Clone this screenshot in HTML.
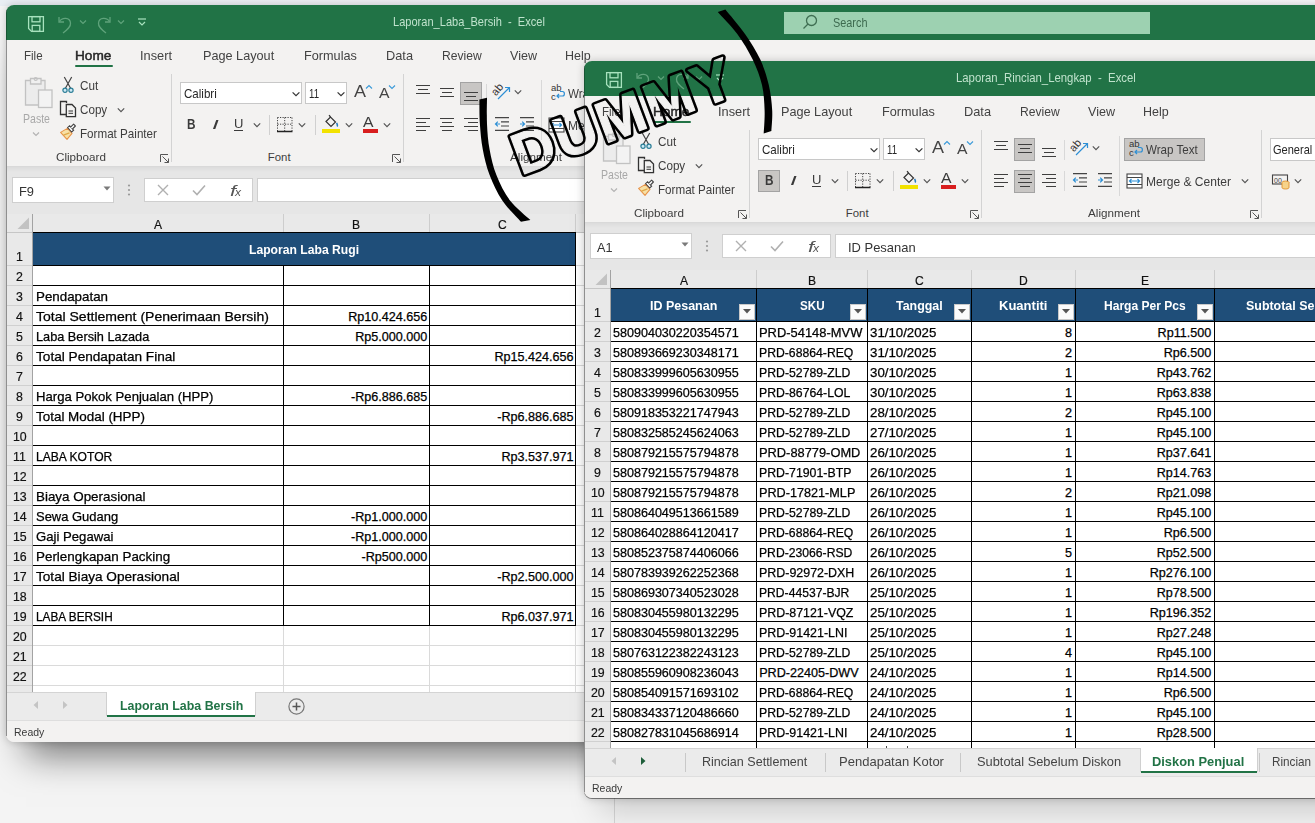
<!DOCTYPE html><html><head><meta charset="utf-8"><style>
html,body{margin:0;padding:0;}
body{width:1315px;height:823px;overflow:hidden;position:relative;background:#f4f4f4;font-family:"Liberation Sans",sans-serif;}
.win{position:absolute;width:1400px;height:823px;}
.t{position:absolute;white-space:pre;}
.c{-webkit-text-stroke:0.25px #000;}
.r{position:absolute;}
.s{position:absolute;overflow:visible;}
</style></head><body>
<div class="r" style="left:0;top:0;width:1315px;height:6px;background:linear-gradient(90deg,#e9eef3,#f1eef4 45%,#f7f5f8)"></div>
<div class="r" style="left:614px;top:790px;width:1px;height:33px;background:#d6d6d6"></div>
<div class="win" style="left:0px;top:0px;"><div class="r" style="left:6px;top:5px;width:1394px;height:737px;background:#f3f2f1;border-radius:8px;box-shadow:0 34px 34px -20px rgba(0,0,0,0.5),0 0 9px rgba(0,0,0,0.2);"></div><div class="r" style="left:6px;top:5px;width:1394px;height:35px;background:#217346;border-radius:8px 8px 0 0;"></div><svg class="s" style="left:26px;top:14px;" width="20" height="20" viewBox="0 0 20 20"><g fill="none" stroke="#a8e2be" stroke-width="1.3"><path d="M2.6 2.6 H17.4 V17.4 H5.5 L2.6 14.5 Z"/><rect x="6" y="2.6" width="8" height="5.2"/><rect x="6.2" y="11.4" width="7.6" height="6"/></g></svg><svg class="s" style="left:56px;top:14px;" width="18" height="20" viewBox="0 0 18 20"><g fill="none" stroke="#5fa37b" stroke-width="1.3"><path d="M3 3 V8 H8"/><path d="M3.5 7.5 C6 3 14 3 14.5 9 C15 13 11 16 7 19"/></g></svg><svg class="s" style="left:77px;top:17px;" width="12" height="10" viewBox="0 0 12 10"><path d="M3 3.5 L6 6.5 L9 3.5" fill="none" stroke="#5fa37b" stroke-width="1.2"/></svg><svg class="s" style="left:95px;top:14px;" width="18" height="20" viewBox="0 0 18 20"><g fill="none" stroke="#5fa37b" stroke-width="1.3"><path d="M15 3 V8 H10"/><path d="M14.5 7.5 C12 3 4 3 3.5 9 C3 13 7 16 11 19"/></g></svg><svg class="s" style="left:114.5px;top:17px;" width="12" height="10" viewBox="0 0 12 10"><path d="M3 3.5 L6 6.5 L9 3.5" fill="none" stroke="#5fa37b" stroke-width="1.2"/></svg><svg class="s" style="left:136px;top:16px;" width="12" height="12" viewBox="0 0 12 12"><g fill="none" stroke="#a8e2be" stroke-width="1.2"><path d="M2 3 H10"/><path d="M3 6 L6 9 L9 6"/></g></svg><div class="t" style="left:392.50px;top:16.47px;font-size:12.2px;line-height:12.2px;color:#bfe2cc;transform:scaleX(0.9074);transform-origin:0 0;">Laporan_Laba_Bersih  -  Excel</div><div class="r" style="left:784px;top:11.5px;width:366px;height:22.200000000000003px;background:#9dd1b1;"></div><svg class="s" style="left:801px;top:13px;" width="18" height="18" viewBox="0 0 18 18"><g fill="none" stroke="#3f6e52" stroke-width="1.3"><circle cx="10.5" cy="7.5" r="5"/><path d="M7 11 L2.5 15.5"/></g></svg><div class="t" style="left:833.00px;top:16.67px;font-size:12.2px;line-height:12.2px;color:#3d6a4f;transform:scaleX(0.8926);transform-origin:0 0;">Search</div><div class="r" style="left:6px;top:40px;width:1394px;height:126px;background:#f3f2f1;"></div><div class="t" style="left:24.10px;top:49.50px;font-size:12.4px;line-height:12.4px;color:#424242;transform:scaleX(0.9310);transform-origin:0 0;">File</div><div class="t" style="left:75.30px;top:49.50px;font-size:12.4px;line-height:12.4px;color:#262626;transform:scaleX(1.1005);transform-origin:0 0;-webkit-text-stroke:0.45px #262626;">Home</div><div class="t" style="left:140.00px;top:49.50px;font-size:12.4px;line-height:12.4px;color:#424242;transform:scaleX(1.0319);transform-origin:0 0;">Insert</div><div class="t" style="left:202.80px;top:49.50px;font-size:12.4px;line-height:12.4px;color:#424242;transform:scaleX(1.0225);transform-origin:0 0;">Page Layout</div><div class="t" style="left:303.80px;top:49.50px;font-size:12.4px;line-height:12.4px;color:#424242;transform:scaleX(1.0237);transform-origin:0 0;">Formulas</div><div class="t" style="left:386.00px;top:49.50px;font-size:12.4px;line-height:12.4px;color:#424242;transform:scaleX(1.0309);transform-origin:0 0;">Data</div><div class="t" style="left:442.30px;top:49.50px;font-size:12.4px;line-height:12.4px;color:#424242;transform:scaleX(0.9765);transform-origin:0 0;">Review</div><div class="t" style="left:510.00px;top:49.50px;font-size:12.4px;line-height:12.4px;color:#424242;transform:scaleX(1.0130);transform-origin:0 0;">View</div><div class="t" style="left:565.30px;top:49.50px;font-size:12.4px;line-height:12.4px;color:#424242;transform:scaleX(1.0078);transform-origin:0 0;">Help</div><div class="r" style="left:74.8px;top:64.6px;width:38.2px;height:2.8000000000000114px;background:#217346;border-radius:1px;"></div><svg class="s" style="left:22px;top:76px;" width="34" height="34" viewBox="0 0 34 34"><g stroke="#c2c2c2" stroke-width="1.3" fill="#ececec"><path d="M3.5 4.5 H23 V29 H3.5 Z"/><path d="M8.5 2.5 H19 V8 H8.5 Z" fill="#f0f0f0"/><rect x="16.5" y="14" width="13.5" height="17.5" fill="#f3f3f3"/></g><circle cx="13.7" cy="3" r="1.5" fill="none" stroke="#c2c2c2" stroke-width="1.2"/></svg><div class="t" style="left:23.00px;top:112.50px;font-size:12.4px;line-height:12.4px;color:#a8a8a8;transform:scaleX(0.8515);transform-origin:0 0;">Paste</div><svg class="s" style="left:29.5px;top:129px;" width="12" height="10" viewBox="0 0 12 10"><path d="M3 3.5 L6 6.5 L9 3.5" fill="none" stroke="#b3b3b3" stroke-width="1.2"/></svg><svg class="s" style="left:61px;top:76px;" width="14" height="18" viewBox="0 0 14 18"><g stroke-width="1.2"><path d="M3.3 1 L9.6 12.2 M10.7 1 L4.4 12.2" stroke="#444" fill="none"/><circle cx="4" cy="14.3" r="2.1" stroke="#2a7d96" fill="#cfeaf5"/><circle cx="10" cy="14.3" r="2.1" stroke="#2a7d96" fill="#cfeaf5"/></g></svg><div class="t" style="left:79.80px;top:79.50px;font-size:12.4px;line-height:12.4px;color:#3d3d3d;transform:scaleX(0.9432);transform-origin:0 0;">Cut</div><svg class="s" style="left:59px;top:100px;" width="18" height="18" viewBox="0 0 18 18"><g fill="none" stroke="#333" stroke-width="1.3"><path d="M7.5 3 V1.5 H1.5 V14.5 H7"/><path d="M7.3 4.5 H13 L16.5 8 V16.6 H7.3 Z"/><path d="M9.5 11 H14 M9.5 13.3 H14" stroke-width="1"/></g></svg><div class="t" style="left:79.80px;top:103.70px;font-size:12.4px;line-height:12.4px;color:#3d3d3d;transform:scaleX(0.9397);transform-origin:0 0;">Copy</div><svg class="s" style="left:114.8px;top:104.5px;" width="12" height="10" viewBox="0 0 12 10"><path d="M2.8 3.4 L6 6.6 L9.2 3.4" fill="none" stroke="#555" stroke-width="1.2"/></svg><svg class="s" style="left:59px;top:123px;" width="18" height="18" viewBox="0 0 18 18"><path d="M1.6 9.4 L8.4 5.4 L13 10.4 L8 16.4 Z" fill="#f7e1a6" stroke="#e8944a" stroke-width="1.1" stroke-linejoin="round"/><path d="M4.5 12.2 L10.5 9.8" stroke="#e0a84a" stroke-width="1.3"/><path d="M8.6 4.6 L10.6 2.8 L14.6 7.2 L12.7 9 Z" fill="#fff" stroke="#444" stroke-width="1.1"/><path d="M11.6 4.2 L14.6 1.2 L16.4 3 L13.4 6" fill="#fff" stroke="#444" stroke-width="1.1" stroke-linejoin="round"/></svg><div class="t" style="left:79.80px;top:128.30px;font-size:12.4px;line-height:12.4px;color:#3d3d3d;transform:scaleX(0.9390);transform-origin:0 0;">Format Painter</div><div class="t" style="left:55.60px;top:152.35px;font-size:11.4px;line-height:11.4px;color:#3d3d3d;transform:scaleX(1.0248);transform-origin:0 0;">Clipboard</div><svg class="s" style="left:159.5px;top:153.5px;" width="10" height="10" viewBox="0 0 10 10"><g fill="none" stroke="#555" stroke-width="1"><path d="M0.5 8 V0.5 H8"/><path d="M2.5 2.5 L8.5 8.5 M4.5 8.5 H8.5 V4.5"/></g></svg><div class="r" style="left:171px;top:74px;width:1.1999999999999886px;height:88px;background:#d3d3d3;"></div><div class="r" style="left:180.4px;top:82.4px;width:121.9px;height:21.89999999999999px;background:#fff;box-sizing:border-box;border:1px solid #c8c8c8;"></div><div class="t" style="left:183.70px;top:88.27px;font-size:12.2px;line-height:12.2px;color:#262626;transform:scaleX(0.9487);transform-origin:0 0;">Calibri</div><svg class="s" style="left:290px;top:88.6px;" width="12" height="10" viewBox="0 0 12 10"><path d="M2.6 3.3 L6 6.7 L9.4 3.3" fill="none" stroke="#333" stroke-width="1.2"/></svg><div class="r" style="left:305.4px;top:82.4px;width:42.0px;height:21.89999999999999px;background:#fff;box-sizing:border-box;border:1px solid #c8c8c8;"></div><div class="t" style="left:308.80px;top:88.27px;font-size:12.2px;line-height:12.2px;color:#262626;transform:scaleX(0.7897);transform-origin:0 0;">11</div><svg class="s" style="left:335px;top:88.6px;" width="12" height="10" viewBox="0 0 12 10"><path d="M2.6 3.3 L6 6.7 L9.4 3.3" fill="none" stroke="#333" stroke-width="1.2"/></svg><div class="t" style="left:354.00px;top:83.41px;font-size:17px;line-height:17px;color:#444;transform:scaleX(1.0582);transform-origin:0 0;">A</div><svg class="s" style="left:365px;top:84px;" width="8" height="6" viewBox="0 0 8 6"><path d="M1 4.5 L4 1.5 L7 4.5" fill="none" stroke="#3a9ad9" stroke-width="1.1"/></svg><div class="t" style="left:379.00px;top:85.53px;font-size:14.5px;line-height:14.5px;color:#444;transform:scaleX(1.0856);transform-origin:0 0;">A</div><svg class="s" style="left:388px;top:84px;" width="8" height="6" viewBox="0 0 8 6"><path d="M1 1.5 L4 4.5 L7 1.5" fill="none" stroke="#3a9ad9" stroke-width="1.1"/></svg><div class="t" style="left:187.30px;top:116.95px;font-size:14px;line-height:14px;color:#3a3a3a;font-weight:bold;transform:scaleX(0.8407);transform-origin:0 0;">B</div><div class="t" style="left:211.50px;top:117.57px;font-size:13.5px;line-height:13.5px;color:#3a3a3a;transform:scaleX(1.8131);transform-origin:0 0;font-style:italic;font-family:"Liberation Serif",serif;">I</div><div class="t" style="left:234.00px;top:117.29px;font-size:13.6px;line-height:13.6px;color:#3a3a3a;transform:scaleX(0.9571);transform-origin:0 0;">U</div><div class="r" style="left:234.2px;top:130.2px;width:8.800000000000011px;height:1.0px;background:#3a3a3a;"></div><svg class="s" style="left:250.8px;top:120px;" width="12" height="10" viewBox="0 0 12 10"><path d="M2.8 3.4 L6 6.6 L9.2 3.4" fill="none" stroke="#555" stroke-width="1.2"/></svg><div class="r" style="left:269.2px;top:114.7px;width:1.0px;height:20.10000000000001px;background:#d0d0d0;"></div><svg class="s" style="left:276px;top:116px;" width="18" height="17" viewBox="0 0 18 17"><g stroke="#444" stroke-width="1" stroke-dasharray="1.2 1.3" fill="none"><path d="M1.5 1.5 H16 M1.5 1.5 V15 M16 1.5 V15 M8.7 1.5 V15 M1.5 8.2 H16"/></g><path d="M1 15.5 H16.5" stroke="#222" stroke-width="1.5"/></svg><svg class="s" style="left:296.3px;top:120px;" width="12" height="10" viewBox="0 0 12 10"><path d="M2.8 3.4 L6 6.6 L9.2 3.4" fill="none" stroke="#555" stroke-width="1.2"/></svg><div class="r" style="left:315.2px;top:114.7px;width:1.0px;height:20.10000000000001px;background:#d0d0d0;"></div><svg class="s" style="left:321px;top:114px;" width="20" height="20" viewBox="0 0 20 20"><path d="M5 7.5 L9.5 3 L14.5 8 L10 12.5 Z" fill="none" stroke="#333" stroke-width="1.2"/><path d="M9.5 3 L8 1.2" stroke="#333" stroke-width="1.2"/><path d="M15.5 9 C16.5 10.5 17 11.5 16 12.5" fill="none" stroke="#2a7fc0" stroke-width="1.5"/></svg><div class="r" style="left:322.4px;top:129.3px;width:17.30000000000001px;height:3.8999999999999773px;background:#f2e200;"></div><svg class="s" style="left:342.5px;top:120px;" width="12" height="10" viewBox="0 0 12 10"><path d="M2.8 3.4 L6 6.6 L9.2 3.4" fill="none" stroke="#555" stroke-width="1.2"/></svg><div class="t" style="left:362.60px;top:115.14px;font-size:14.6px;line-height:14.6px;color:#3a3a3a;transform:scaleX(1.0782);transform-origin:0 0;">A</div><div class="r" style="left:362.6px;top:128.8px;width:15.399999999999977px;height:4.399999999999977px;background:#d81e1e;"></div><svg class="s" style="left:381.2px;top:120px;" width="12" height="10" viewBox="0 0 12 10"><path d="M2.8 3.4 L6 6.6 L9.2 3.4" fill="none" stroke="#555" stroke-width="1.2"/></svg><div class="t" style="left:267.80px;top:152.35px;font-size:11.4px;line-height:11.4px;color:#3d3d3d;">Font</div><svg class="s" style="left:391.5px;top:153.5px;" width="10" height="10" viewBox="0 0 10 10"><g fill="none" stroke="#555" stroke-width="1"><path d="M0.5 8 V0.5 H8"/><path d="M2.5 2.5 L8.5 8.5 M4.5 8.5 H8.5 V4.5"/></g></svg><div class="r" style="left:403.2px;top:74px;width:1.1999999999999886px;height:88px;background:#d3d3d3;"></div><div class="r" style="left:460px;top:82.2px;width:21.80000000000001px;height:22.5px;background:#c8c6c4;box-sizing:border-box;border:1px solid #a3a3a3;"></div><div class="r" style="left:416px;top:84.8px;width:13.600000000000023px;height:1.1500000000000057px;background:#3f3f3f;"></div><div class="r" style="left:417.8px;top:88.9px;width:10.0px;height:1.1500000000000057px;background:#3f3f3f;"></div><div class="r" style="left:416px;top:92.9px;width:13.600000000000023px;height:1.1500000000000057px;background:#3f3f3f;"></div><div class="r" style="left:440px;top:87.9px;width:14px;height:1.1500000000000057px;background:#3f3f3f;"></div><div class="r" style="left:442px;top:91.9px;width:10px;height:1.1500000000000057px;background:#3f3f3f;"></div><div class="r" style="left:440px;top:95.9px;width:14px;height:1.1500000000000057px;background:#3f3f3f;"></div><div class="r" style="left:464px;top:91.9px;width:13.800000000000011px;height:1.1500000000000057px;background:#3f3f3f;"></div><div class="r" style="left:466.2px;top:95.9px;width:9.699999999999989px;height:1.1500000000000057px;background:#3f3f3f;"></div><div class="r" style="left:464px;top:99.9px;width:13.800000000000011px;height:1.1500000000000057px;background:#3f3f3f;"></div><div class="r" style="left:486.3px;top:84px;width:1.0px;height:20px;background:#d8d8d8;"></div><svg class="s" style="left:491px;top:82px;" width="22" height="20" viewBox="0 0 22 20"><text x="0" y="0" font-size="11" fill="#333" transform="translate(5 14.5) rotate(-50)" font-family="Liberation Sans">ab</text><path d="M7 17 L18.5 5.5 M14 5.5 H18.5 V10" fill="none" stroke="#2d8fd5" stroke-width="1.2"/></svg><svg class="s" style="left:512px;top:87px;" width="12" height="10" viewBox="0 0 12 10"><path d="M2.8 3.4 L6 6.6 L9.2 3.4" fill="none" stroke="#555" stroke-width="1.2"/></svg><div class="r" style="left:416px;top:117.8px;width:13.600000000000023px;height:1.1500000000000057px;background:#3f3f3f;"></div><div class="r" style="left:416px;top:121.8px;width:9.699999999999989px;height:1.1500000000000057px;background:#3f3f3f;"></div><div class="r" style="left:416px;top:125.9px;width:13.600000000000023px;height:1.1500000000000057px;background:#3f3f3f;"></div><div class="r" style="left:416px;top:129.9px;width:9.699999999999989px;height:1.1500000000000057px;background:#3f3f3f;"></div><div class="r" style="left:440px;top:117.8px;width:14px;height:1.1500000000000057px;background:#3f3f3f;"></div><div class="r" style="left:442px;top:121.8px;width:10px;height:1.1500000000000057px;background:#3f3f3f;"></div><div class="r" style="left:440px;top:125.9px;width:14px;height:1.1500000000000057px;background:#3f3f3f;"></div><div class="r" style="left:442px;top:129.9px;width:10px;height:1.1500000000000057px;background:#3f3f3f;"></div><div class="r" style="left:464px;top:117.8px;width:13.800000000000011px;height:1.1500000000000057px;background:#3f3f3f;"></div><div class="r" style="left:468.1px;top:121.8px;width:9.699999999999989px;height:1.1500000000000057px;background:#3f3f3f;"></div><div class="r" style="left:464px;top:125.9px;width:13.800000000000011px;height:1.1500000000000057px;background:#3f3f3f;"></div><div class="r" style="left:468.1px;top:129.9px;width:9.699999999999989px;height:1.1500000000000057px;background:#3f3f3f;"></div><div class="r" style="left:486.3px;top:115px;width:1.0px;height:20px;background:#d8d8d8;"></div><svg class="s" style="left:494px;top:116px;" width="16" height="17" viewBox="0 0 16 17"><g stroke="#444" stroke-width="1.2"><path d="M1 1.6 H15 M7 5.8 H15 M7 10 H15 M1 14.4 H15"/></g><path d="M6 8 H1.5 M3.8 5.7 L1.5 8 L3.8 10.3" fill="none" stroke="#2d8fd5" stroke-width="1.2"/></svg><svg class="s" style="left:518.5px;top:116px;" width="16" height="17" viewBox="0 0 16 17"><g stroke="#444" stroke-width="1.2"><path d="M1 1.6 H15 M7 5.8 H15 M7 10 H15 M1 14.4 H15"/></g><path d="M1 8 H5.5 M3.2 5.7 L5.5 8 L3.2 10.3" fill="none" stroke="#2d8fd5" stroke-width="1.2"/></svg><div class="r" style="left:541px;top:80px;width:1px;height:60px;background:#d8d8d8;"></div><svg class="s" style="left:549px;top:83px;" width="18" height="18" viewBox="0 0 18 18"><text x="2" y="8" font-size="9.5" fill="#333" font-family="Liberation Sans">ab</text><text x="2" y="16.5" font-size="9.5" fill="#333" font-family="Liberation Sans">c</text><path d="M8 13 H13.5 C16 13 16 8.5 13.5 8.5 H11 M10 11 L8 13 L10 15" fill="none" stroke="#2d8fd5" stroke-width="1.2"/></svg><div class="t" style="left:568.00px;top:88.30px;font-size:12.4px;line-height:12.4px;color:#3d3d3d;transform:scaleX(0.9357);transform-origin:0 0;">Wrap Text</div><svg class="s" style="left:548px;top:117px;" width="17" height="16" viewBox="0 0 17 16"><rect x="1" y="1" width="15" height="14" fill="#fff" stroke="#444" stroke-width="1.1"/><path d="M1 4.5 H16 M1 11.5 H16" stroke="#444" stroke-width="1"/><path d="M3.5 8 H13.5 M5.5 6 L3.5 8 L5.5 10 M11.5 6 L13.5 8 L11.5 10" fill="none" stroke="#2d8fd5" stroke-width="1.2"/></svg><div class="t" style="left:568.00px;top:119.80px;font-size:12.4px;line-height:12.4px;color:#3d3d3d;transform:scaleX(0.9712);transform-origin:0 0;">Merge &amp; Center</div><svg class="s" style="left:661px;top:120px;" width="12" height="10" viewBox="0 0 12 10"><path d="M2.8 3.4 L6 6.6 L9.2 3.4" fill="none" stroke="#555" stroke-width="1.2"/></svg><div class="t" style="left:509.50px;top:152.35px;font-size:11.4px;line-height:11.4px;color:#3d3d3d;transform:scaleX(1.0258);transform-origin:0 0;">Alignment</div><svg class="s" style="left:671.5px;top:153.5px;" width="10" height="10" viewBox="0 0 10 10"><g fill="none" stroke="#555" stroke-width="1"><path d="M0.5 8 V0.5 H8"/><path d="M2.5 2.5 L8.5 8.5 M4.5 8.5 H8.5 V4.5"/></g></svg><div class="r" style="left:683px;top:74px;width:1.2000000000000455px;height:88px;background:#d3d3d3;"></div><div class="r" style="left:692px;top:82.2px;width:108px;height:22.5px;background:#fff;box-sizing:border-box;border:1px solid #c8c8c8;"></div><div class="t" style="left:695.30px;top:87.80px;font-size:12.4px;line-height:12.4px;color:#262626;transform:scaleX(0.8909);transform-origin:0 0;">General</div><svg class="s" style="left:693px;top:116px;" width="20" height="18" viewBox="0 0 20 18"><rect x="1.5" y="3" width="15" height="9" fill="none" stroke="#444" stroke-width="1.1"/><text x="3" y="10.5" font-size="7" fill="#444" font-family="Liberation Sans">00</text><ellipse cx="14.5" cy="10.5" rx="3.5" ry="1.5" fill="#f6d38a" stroke="#e0902a" stroke-width="0.9"/><path d="M11 10.5 V15.5 C11 17.5 18 17.5 18 15.5 V10.5" fill="#f6d38a" stroke="#e0902a" stroke-width="0.9"/></svg><svg class="s" style="left:714px;top:120px;" width="12" height="10" viewBox="0 0 12 10"><path d="M2.8 3.4 L6 6.6 L9.2 3.4" fill="none" stroke="#555" stroke-width="1.2"/></svg><div class="r" style="left:6px;top:166px;width:1394px;height:48px;background:#e6e6e6;"></div><div class="r" style="left:6px;top:166px;width:1394px;height:1px;background:#d9d9d9;"></div><div class="r" style="left:6px;top:167px;width:1394px;height:5px;background:linear-gradient(#dcdcdc,#e6e6e6);"></div><div class="r" style="left:12.3px;top:177.4px;width:101.3px;height:25.19999999999999px;background:#fff;box-sizing:border-box;border:1px solid #cfcfcf;"></div><div class="t" style="left:18.80px;top:184.50px;font-size:13px;line-height:13px;color:#333;transform:scaleX(0.9888);transform-origin:0 0;">F9</div><svg class="s" style="left:103px;top:186px;" width="8" height="5" viewBox="0 0 8 5"><path d="M0.5 0.5 H7.5 L4 4.5 Z" fill="#7a7a7a"/></svg><svg class="s" style="left:127px;top:183px;" width="4" height="14" viewBox="0 0 4 14"><g fill="#9a9a9a"><circle cx="2" cy="2.5" r="1.1"/><circle cx="2" cy="7" r="1.1"/><circle cx="2" cy="11.5" r="1.1"/></g></svg><div class="r" style="left:144.4px;top:177.5px;width:108.9px;height:24.80000000000001px;background:#fff;box-sizing:border-box;border:1px solid #cfcfcf;"></div><svg class="s" style="left:156px;top:183px;" width="14" height="14" viewBox="0 0 14 14"><path d="M2 2 L12 12 M12 2 L2 12" stroke="#b0b0b0" stroke-width="1.4"/></svg><svg class="s" style="left:191px;top:183px;" width="16" height="14" viewBox="0 0 16 14"><path d="M2 7.5 L6 11.5 L14 2.5" fill="none" stroke="#b0b0b0" stroke-width="1.6"/></svg><div class="t" style="left:229.50px;top:183.65px;font-size:14px;line-height:14px;color:#555;transform:scaleX(1.5427);transform-origin:0 0;font-style:italic;font-family:"Liberation Serif",serif;">f</div><div class="t" style="left:234.80px;top:187.53px;font-size:10px;line-height:10px;color:#555;transform:scaleX(1.2000);transform-origin:0 0;font-style:italic;font-family:"Liberation Serif",serif;">x</div><div class="r" style="left:257.4px;top:177.5px;width:1142.6px;height:24.80000000000001px;background:#fff;box-sizing:border-box;border:1px solid #cfcfcf;"></div><div class="r" style="left:7px;top:214px;width:1393px;height:478px;background:#fff;"></div><div class="r" style="left:7px;top:214px;width:1393px;height:18.5px;background:#e9e9e9;"></div><div class="r" style="left:7px;top:231.5px;width:1393px;height:1.0px;background:#c6c6c6;"></div><svg class="s" style="left:17px;top:217px;" width="13" height="13" viewBox="0 0 13 13"><path d="M12 0.5 V12 H0.5 Z" fill="#c2c2c2"/></svg><div class="r" style="left:283.1px;top:214px;width:1.0px;height:18.5px;background:#cdcdcd;"></div><div class="t" style="left:154.02px;top:217.50px;font-size:13px;line-height:13px;color:#111;transform:scaleX(0.9300);transform-origin:0 0;-webkit-text-stroke:0.2px #111;">A</div><div class="r" style="left:428.9px;top:214px;width:1.0px;height:18.5px;background:#cdcdcd;"></div><div class="t" style="left:352.47px;top:217.50px;font-size:13px;line-height:13px;color:#111;transform:scaleX(0.9300);transform-origin:0 0;-webkit-text-stroke:0.2px #111;">B</div><div class="r" style="left:575.1px;top:214px;width:1.0px;height:18.5px;background:#cdcdcd;"></div><div class="t" style="left:498.13px;top:217.50px;font-size:13px;line-height:13px;color:#111;transform:scaleX(0.9300);transform-origin:0 0;-webkit-text-stroke:0.2px #111;">C</div><div class="r" style="left:759.5px;top:214px;width:1.0px;height:18.5px;background:#cdcdcd;"></div><div class="t" style="left:663.43px;top:217.50px;font-size:13px;line-height:13px;color:#111;transform:scaleX(0.9300);transform-origin:0 0;-webkit-text-stroke:0.2px #111;">D</div><div class="r" style="left:7px;top:232.5px;width:25.5px;height:459.5px;background:#e9e9e9;"></div><div class="r" style="left:32px;top:214px;width:1px;height:478px;background:#a3a3a3;"></div><div class="r" style="left:7px;top:265.0px;width:25px;height:1.0px;background:#d0d0d0;"></div><div class="t" style="left:16.37px;top:250.30px;font-size:13px;line-height:13px;color:#111;transform:scaleX(0.9500);transform-origin:0 0;-webkit-text-stroke:0.2px #111;">1</div><div class="r" style="left:7px;top:285.0px;width:25px;height:1.0px;background:#d0d0d0;"></div><div class="t" style="left:16.37px;top:270.30px;font-size:13px;line-height:13px;color:#111;transform:scaleX(0.9500);transform-origin:0 0;-webkit-text-stroke:0.2px #111;">2</div><div class="r" style="left:7px;top:305.0px;width:25px;height:1.0px;background:#d0d0d0;"></div><div class="t" style="left:16.37px;top:290.30px;font-size:13px;line-height:13px;color:#111;transform:scaleX(0.9500);transform-origin:0 0;-webkit-text-stroke:0.2px #111;">3</div><div class="r" style="left:7px;top:325.0px;width:25px;height:1.0px;background:#d0d0d0;"></div><div class="t" style="left:16.37px;top:310.30px;font-size:13px;line-height:13px;color:#111;transform:scaleX(0.9500);transform-origin:0 0;-webkit-text-stroke:0.2px #111;">4</div><div class="r" style="left:7px;top:345.0px;width:25px;height:1.0px;background:#d0d0d0;"></div><div class="t" style="left:16.37px;top:330.30px;font-size:13px;line-height:13px;color:#111;transform:scaleX(0.9500);transform-origin:0 0;-webkit-text-stroke:0.2px #111;">5</div><div class="r" style="left:7px;top:365.0px;width:25px;height:1.0px;background:#d0d0d0;"></div><div class="t" style="left:16.37px;top:350.30px;font-size:13px;line-height:13px;color:#111;transform:scaleX(0.9500);transform-origin:0 0;-webkit-text-stroke:0.2px #111;">6</div><div class="r" style="left:7px;top:385.0px;width:25px;height:1.0px;background:#d0d0d0;"></div><div class="t" style="left:16.37px;top:370.30px;font-size:13px;line-height:13px;color:#111;transform:scaleX(0.9500);transform-origin:0 0;-webkit-text-stroke:0.2px #111;">7</div><div class="r" style="left:7px;top:405.0px;width:25px;height:1.0px;background:#d0d0d0;"></div><div class="t" style="left:16.37px;top:390.30px;font-size:13px;line-height:13px;color:#111;transform:scaleX(0.9500);transform-origin:0 0;-webkit-text-stroke:0.2px #111;">8</div><div class="r" style="left:7px;top:425.0px;width:25px;height:1.0px;background:#d0d0d0;"></div><div class="t" style="left:16.37px;top:410.30px;font-size:13px;line-height:13px;color:#111;transform:scaleX(0.9500);transform-origin:0 0;-webkit-text-stroke:0.2px #111;">9</div><div class="r" style="left:7px;top:445.0px;width:25px;height:1.0px;background:#d0d0d0;"></div><div class="t" style="left:12.93px;top:430.30px;font-size:13px;line-height:13px;color:#111;transform:scaleX(0.9500);transform-origin:0 0;-webkit-text-stroke:0.2px #111;">10</div><div class="r" style="left:7px;top:465.0px;width:25px;height:1.0px;background:#d0d0d0;"></div><div class="t" style="left:13.39px;top:450.30px;font-size:13px;line-height:13px;color:#111;transform:scaleX(0.9500);transform-origin:0 0;-webkit-text-stroke:0.2px #111;">11</div><div class="r" style="left:7px;top:485.0px;width:25px;height:1.0px;background:#d0d0d0;"></div><div class="t" style="left:12.93px;top:470.30px;font-size:13px;line-height:13px;color:#111;transform:scaleX(0.9500);transform-origin:0 0;-webkit-text-stroke:0.2px #111;">12</div><div class="r" style="left:7px;top:505.0px;width:25px;height:1.0px;background:#d0d0d0;"></div><div class="t" style="left:12.93px;top:490.30px;font-size:13px;line-height:13px;color:#111;transform:scaleX(0.9500);transform-origin:0 0;-webkit-text-stroke:0.2px #111;">13</div><div class="r" style="left:7px;top:525.0px;width:25px;height:1.0px;background:#d0d0d0;"></div><div class="t" style="left:12.93px;top:510.30px;font-size:13px;line-height:13px;color:#111;transform:scaleX(0.9500);transform-origin:0 0;-webkit-text-stroke:0.2px #111;">14</div><div class="r" style="left:7px;top:545.0px;width:25px;height:1.0px;background:#d0d0d0;"></div><div class="t" style="left:12.93px;top:530.30px;font-size:13px;line-height:13px;color:#111;transform:scaleX(0.9500);transform-origin:0 0;-webkit-text-stroke:0.2px #111;">15</div><div class="r" style="left:7px;top:565.0px;width:25px;height:1.0px;background:#d0d0d0;"></div><div class="t" style="left:12.93px;top:550.30px;font-size:13px;line-height:13px;color:#111;transform:scaleX(0.9500);transform-origin:0 0;-webkit-text-stroke:0.2px #111;">16</div><div class="r" style="left:7px;top:585.0px;width:25px;height:1.0px;background:#d0d0d0;"></div><div class="t" style="left:12.93px;top:570.30px;font-size:13px;line-height:13px;color:#111;transform:scaleX(0.9500);transform-origin:0 0;-webkit-text-stroke:0.2px #111;">17</div><div class="r" style="left:7px;top:605.0px;width:25px;height:1.0px;background:#d0d0d0;"></div><div class="t" style="left:12.93px;top:590.30px;font-size:13px;line-height:13px;color:#111;transform:scaleX(0.9500);transform-origin:0 0;-webkit-text-stroke:0.2px #111;">18</div><div class="r" style="left:7px;top:625.0px;width:25px;height:1.0px;background:#d0d0d0;"></div><div class="t" style="left:12.93px;top:610.30px;font-size:13px;line-height:13px;color:#111;transform:scaleX(0.9500);transform-origin:0 0;-webkit-text-stroke:0.2px #111;">19</div><div class="r" style="left:7px;top:645.0px;width:25px;height:1.0px;background:#d0d0d0;"></div><div class="t" style="left:12.93px;top:630.30px;font-size:13px;line-height:13px;color:#111;transform:scaleX(0.9500);transform-origin:0 0;-webkit-text-stroke:0.2px #111;">20</div><div class="r" style="left:7px;top:665.0px;width:25px;height:1.0px;background:#d0d0d0;"></div><div class="t" style="left:12.93px;top:650.30px;font-size:13px;line-height:13px;color:#111;transform:scaleX(0.9500);transform-origin:0 0;-webkit-text-stroke:0.2px #111;">21</div><div class="r" style="left:7px;top:685.0px;width:25px;height:1.0px;background:#d0d0d0;"></div><div class="t" style="left:12.93px;top:670.30px;font-size:13px;line-height:13px;color:#111;transform:scaleX(0.9500);transform-origin:0 0;-webkit-text-stroke:0.2px #111;">22</div><div class="r" style="left:32.5px;top:232.5px;width:543.1px;height:33.0px;background:#1f4e79;"></div><div class="t" style="left:249.05px;top:242.70px;font-size:13px;line-height:13px;color:#fff;font-weight:bold;transform:scaleX(0.9344);transform-origin:0 0;">Laporan Laba Rugi</div><div class="t" style="left:35.80px;top:291.03px;font-size:12.6px;line-height:12.6px;color:#000;transform:scaleX(1.0595);transform-origin:0 0;-webkit-text-stroke:0.25px #000;">Pendapatan</div><div class="t" style="left:35.80px;top:311.03px;font-size:12.6px;line-height:12.6px;color:#000;transform:scaleX(1.1128);transform-origin:0 0;-webkit-text-stroke:0.25px #000;">Total Settlement (Penerimaan Bersih)</div><div class="t" style="left:348.24px;top:311.03px;font-size:12.6px;line-height:12.6px;color:#000;-webkit-text-stroke:0.25px #000;">Rp10.424.656</div><div class="t" style="left:35.80px;top:331.03px;font-size:12.6px;line-height:12.6px;color:#000;transform:scaleX(1.0109);transform-origin:0 0;-webkit-text-stroke:0.25px #000;">Laba Bersih Lazada</div><div class="t" style="left:355.25px;top:331.03px;font-size:12.6px;line-height:12.6px;color:#000;-webkit-text-stroke:0.25px #000;">Rp5.000.000</div><div class="t" style="left:35.80px;top:351.03px;font-size:12.6px;line-height:12.6px;color:#000;transform:scaleX(1.0816);transform-origin:0 0;-webkit-text-stroke:0.25px #000;">Total Pendapatan Final</div><div class="t" style="left:494.44px;top:351.03px;font-size:12.6px;line-height:12.6px;color:#000;-webkit-text-stroke:0.25px #000;">Rp15.424.656</div><div class="t" style="left:35.80px;top:391.03px;font-size:12.6px;line-height:12.6px;color:#000;transform:scaleX(1.0430);transform-origin:0 0;-webkit-text-stroke:0.25px #000;">Harga Pokok Penjualan (HPP)</div><div class="t" style="left:351.05px;top:391.03px;font-size:12.6px;line-height:12.6px;color:#000;-webkit-text-stroke:0.25px #000;">-Rp6.886.685</div><div class="t" style="left:35.80px;top:411.03px;font-size:12.6px;line-height:12.6px;color:#000;transform:scaleX(1.0662);transform-origin:0 0;-webkit-text-stroke:0.25px #000;">Total Modal (HPP)</div><div class="t" style="left:497.25px;top:411.03px;font-size:12.6px;line-height:12.6px;color:#000;-webkit-text-stroke:0.25px #000;">-Rp6.886.685</div><div class="t" style="left:35.80px;top:451.03px;font-size:12.6px;line-height:12.6px;color:#000;transform:scaleX(0.9586);transform-origin:0 0;-webkit-text-stroke:0.25px #000;">LABA KOTOR</div><div class="t" style="left:501.45px;top:451.03px;font-size:12.6px;line-height:12.6px;color:#000;-webkit-text-stroke:0.25px #000;">Rp3.537.971</div><div class="t" style="left:35.80px;top:491.03px;font-size:12.6px;line-height:12.6px;color:#000;transform:scaleX(1.0636);transform-origin:0 0;-webkit-text-stroke:0.25px #000;">Biaya Operasional</div><div class="t" style="left:35.80px;top:511.03px;font-size:12.6px;line-height:12.6px;color:#000;transform:scaleX(1.0294);transform-origin:0 0;-webkit-text-stroke:0.25px #000;">Sewa Gudang</div><div class="t" style="left:351.05px;top:511.03px;font-size:12.6px;line-height:12.6px;color:#000;-webkit-text-stroke:0.25px #000;">-Rp1.000.000</div><div class="t" style="left:35.80px;top:531.03px;font-size:12.6px;line-height:12.6px;color:#000;transform:scaleX(1.0439);transform-origin:0 0;-webkit-text-stroke:0.25px #000;">Gaji Pegawai</div><div class="t" style="left:351.05px;top:531.03px;font-size:12.6px;line-height:12.6px;color:#000;-webkit-text-stroke:0.25px #000;">-Rp1.000.000</div><div class="t" style="left:35.80px;top:551.03px;font-size:12.6px;line-height:12.6px;color:#000;transform:scaleX(1.0644);transform-origin:0 0;-webkit-text-stroke:0.25px #000;">Perlengkapan Packing</div><div class="t" style="left:361.56px;top:551.03px;font-size:12.6px;line-height:12.6px;color:#000;-webkit-text-stroke:0.25px #000;">-Rp500.000</div><div class="t" style="left:35.80px;top:571.03px;font-size:12.6px;line-height:12.6px;color:#000;transform:scaleX(1.0807);transform-origin:0 0;-webkit-text-stroke:0.25px #000;">Total Biaya Operasional</div><div class="t" style="left:497.25px;top:571.03px;font-size:12.6px;line-height:12.6px;color:#000;-webkit-text-stroke:0.25px #000;">-Rp2.500.000</div><div class="t" style="left:35.80px;top:611.03px;font-size:12.6px;line-height:12.6px;color:#000;transform:scaleX(0.9361);transform-origin:0 0;-webkit-text-stroke:0.25px #000;">LABA BERSIH</div><div class="t" style="left:501.45px;top:611.03px;font-size:12.6px;line-height:12.6px;color:#000;-webkit-text-stroke:0.25px #000;">Rp6.037.971</div><div class="r" style="left:32.5px;top:625.0px;width:727.5px;height:1.0px;background:#dadada;"></div><div class="r" style="left:32.5px;top:645.0px;width:727.5px;height:1.0px;background:#dadada;"></div><div class="r" style="left:32.5px;top:665.0px;width:727.5px;height:1.0px;background:#dadada;"></div><div class="r" style="left:32.5px;top:685.0px;width:727.5px;height:1.0px;background:#dadada;"></div><div class="r" style="left:283.1px;top:625.5px;width:1.0px;height:66.5px;background:#dadada;"></div><div class="r" style="left:428.9px;top:625.5px;width:1.0px;height:66.5px;background:#dadada;"></div><div class="r" style="left:575.1px;top:625.5px;width:1.0px;height:66.5px;background:#dadada;"></div><div class="r" style="left:575.6px;top:265.0px;width:184.39999999999998px;height:1.0px;background:#dadada;"></div><div class="r" style="left:575.6px;top:285.0px;width:184.39999999999998px;height:1.0px;background:#dadada;"></div><div class="r" style="left:575.6px;top:305.0px;width:184.39999999999998px;height:1.0px;background:#dadada;"></div><div class="r" style="left:575.6px;top:325.0px;width:184.39999999999998px;height:1.0px;background:#dadada;"></div><div class="r" style="left:575.6px;top:345.0px;width:184.39999999999998px;height:1.0px;background:#dadada;"></div><div class="r" style="left:575.6px;top:365.0px;width:184.39999999999998px;height:1.0px;background:#dadada;"></div><div class="r" style="left:575.6px;top:385.0px;width:184.39999999999998px;height:1.0px;background:#dadada;"></div><div class="r" style="left:575.6px;top:405.0px;width:184.39999999999998px;height:1.0px;background:#dadada;"></div><div class="r" style="left:575.6px;top:425.0px;width:184.39999999999998px;height:1.0px;background:#dadada;"></div><div class="r" style="left:575.6px;top:445.0px;width:184.39999999999998px;height:1.0px;background:#dadada;"></div><div class="r" style="left:575.6px;top:465.0px;width:184.39999999999998px;height:1.0px;background:#dadada;"></div><div class="r" style="left:575.6px;top:485.0px;width:184.39999999999998px;height:1.0px;background:#dadada;"></div><div class="r" style="left:575.6px;top:505.0px;width:184.39999999999998px;height:1.0px;background:#dadada;"></div><div class="r" style="left:575.6px;top:525.0px;width:184.39999999999998px;height:1.0px;background:#dadada;"></div><div class="r" style="left:575.6px;top:545.0px;width:184.39999999999998px;height:1.0px;background:#dadada;"></div><div class="r" style="left:575.6px;top:565.0px;width:184.39999999999998px;height:1.0px;background:#dadada;"></div><div class="r" style="left:575.6px;top:585.0px;width:184.39999999999998px;height:1.0px;background:#dadada;"></div><div class="r" style="left:575.6px;top:605.0px;width:184.39999999999998px;height:1.0px;background:#dadada;"></div><div class="r" style="left:759.5px;top:232.5px;width:1.0px;height:459.5px;background:#dadada;"></div><div class="r" style="left:32.5px;top:232.0px;width:543.6px;height:1.0px;background:#000;"></div><div class="r" style="left:32.5px;top:265.0px;width:543.6px;height:1.0px;background:#000;"></div><div class="r" style="left:32.5px;top:285.0px;width:543.6px;height:1.0px;background:#000;"></div><div class="r" style="left:32.5px;top:305.0px;width:543.6px;height:1.0px;background:#000;"></div><div class="r" style="left:32.5px;top:325.0px;width:543.6px;height:1.0px;background:#000;"></div><div class="r" style="left:32.5px;top:345.0px;width:543.6px;height:1.0px;background:#000;"></div><div class="r" style="left:32.5px;top:365.0px;width:543.6px;height:1.0px;background:#000;"></div><div class="r" style="left:32.5px;top:385.0px;width:543.6px;height:1.0px;background:#000;"></div><div class="r" style="left:32.5px;top:405.0px;width:543.6px;height:1.0px;background:#000;"></div><div class="r" style="left:32.5px;top:425.0px;width:543.6px;height:1.0px;background:#000;"></div><div class="r" style="left:32.5px;top:445.0px;width:543.6px;height:1.0px;background:#000;"></div><div class="r" style="left:32.5px;top:465.0px;width:543.6px;height:1.0px;background:#000;"></div><div class="r" style="left:32.5px;top:485.0px;width:543.6px;height:1.0px;background:#000;"></div><div class="r" style="left:32.5px;top:505.0px;width:543.6px;height:1.0px;background:#000;"></div><div class="r" style="left:32.5px;top:525.0px;width:543.6px;height:1.0px;background:#000;"></div><div class="r" style="left:32.5px;top:545.0px;width:543.6px;height:1.0px;background:#000;"></div><div class="r" style="left:32.5px;top:565.0px;width:543.6px;height:1.0px;background:#000;"></div><div class="r" style="left:32.5px;top:585.0px;width:543.6px;height:1.0px;background:#000;"></div><div class="r" style="left:32.5px;top:605.0px;width:543.6px;height:1.0px;background:#000;"></div><div class="r" style="left:32.5px;top:625.0px;width:543.6px;height:1.0px;background:#000;"></div><div class="r" style="left:575.1px;top:232.5px;width:1.0px;height:393.5px;background:#000;"></div><div class="r" style="left:283.1px;top:265.5px;width:1.0px;height:360.5px;background:#000;"></div><div class="r" style="left:428.9px;top:265.5px;width:1.0px;height:360.5px;background:#000;"></div><div class="r" style="left:7px;top:692px;width:1393px;height:28.200000000000045px;background:#ebebeb;"></div><div class="r" style="left:7px;top:692px;width:1393px;height:1px;background:#d4d4d4;"></div><svg class="s" style="left:31px;top:699px;" width="10" height="12" viewBox="0 0 10 12"><path d="M7 2 L2.5 6 L7 10 Z" fill="#c4c4c4"/></svg><svg class="s" style="left:60px;top:699px;" width="10" height="12" viewBox="0 0 10 12"><path d="M3 2 L7.5 6 L3 10 Z" fill="#c4c4c4"/></svg><div class="r" style="left:107.4px;top:692px;width:148.1px;height:24px;background:#fff;box-shadow:1px 0 0 #d0d0d0,-1px 0 0 #d0d0d0;"></div><div class="r" style="left:107.4px;top:714.6px;width:148.1px;height:2.0px;background:#217346;"></div><div class="t" style="left:120.20px;top:698.80px;font-size:13px;line-height:13px;color:#217346;font-weight:bold;transform:scaleX(0.9528);transform-origin:0 0;">Laporan Laba Bersih</div><svg class="s" style="left:287px;top:698px;" width="19" height="17" viewBox="0 0 19 17"><circle cx="9.5" cy="8.5" r="7.6" fill="none" stroke="#777" stroke-width="1.2"/><path d="M9.5 4.5 V12.5 M5.5 8.5 H13.5" stroke="#555" stroke-width="1.5"/></svg><div class="r" style="left:7px;top:720.2px;width:1393px;height:21.799999999999955px;background:#f3f2f1;border-radius:0 0 0 8px;"></div><div class="r" style="left:7px;top:720.2px;width:1393px;height:0.7999999999999545px;background:#dedede;"></div><div class="t" style="left:14.30px;top:726.18px;font-size:11.6px;line-height:11.6px;color:#3a3a3a;transform:scaleX(0.9037);transform-origin:0 0;">Ready</div><div class="r" style="left:6px;top:40px;width:1px;height:696px;background:#8f8f8f;"></div><div class="r" style="left:6px;top:10px;width:1px;height:30px;background:rgba(0,0,0,0.25);"></div></div><div class="win" style="left:578px;top:56px;"><div class="r" style="left:6px;top:5px;width:1394px;height:737px;background:#f3f2f1;border-radius:8px;box-shadow:0 1px 0 rgba(0,0,0,0.45),0 30px 30px -16px rgba(0,0,0,0.17),0 0 9px rgba(0,0,0,0.2);"></div><div class="r" style="left:6px;top:5px;width:1394px;height:35px;background:#217346;border-radius:8px 8px 0 0;"></div><svg class="s" style="left:26px;top:14px;" width="20" height="20" viewBox="0 0 20 20"><g fill="none" stroke="#a8e2be" stroke-width="1.3"><path d="M2.6 2.6 H17.4 V17.4 H5.5 L2.6 14.5 Z"/><rect x="6" y="2.6" width="8" height="5.2"/><rect x="6.2" y="11.4" width="7.6" height="6"/></g></svg><svg class="s" style="left:56px;top:14px;" width="18" height="20" viewBox="0 0 18 20"><g fill="none" stroke="#5fa37b" stroke-width="1.3"><path d="M3 3 V8 H8"/><path d="M3.5 7.5 C6 3 14 3 14.5 9 C15 13 11 16 7 19"/></g></svg><svg class="s" style="left:77px;top:17px;" width="12" height="10" viewBox="0 0 12 10"><path d="M3 3.5 L6 6.5 L9 3.5" fill="none" stroke="#5fa37b" stroke-width="1.2"/></svg><svg class="s" style="left:95px;top:14px;" width="18" height="20" viewBox="0 0 18 20"><g fill="none" stroke="#5fa37b" stroke-width="1.3"><path d="M15 3 V8 H10"/><path d="M14.5 7.5 C12 3 4 3 3.5 9 C3 13 7 16 11 19"/></g></svg><svg class="s" style="left:114.5px;top:17px;" width="12" height="10" viewBox="0 0 12 10"><path d="M3 3.5 L6 6.5 L9 3.5" fill="none" stroke="#5fa37b" stroke-width="1.2"/></svg><svg class="s" style="left:136px;top:16px;" width="12" height="12" viewBox="0 0 12 12"><g fill="none" stroke="#a8e2be" stroke-width="1.2"><path d="M2 3 H10"/><path d="M3 6 L6 9 L9 6"/></g></svg><div class="t" style="left:378.00px;top:16.47px;font-size:12.2px;line-height:12.2px;color:#bfe2cc;transform:scaleX(0.9313);transform-origin:0 0;">Laporan_Rincian_Lengkap  -  Excel</div><div class="r" style="left:6px;top:40px;width:1394px;height:126px;background:#f3f2f1;"></div><div class="t" style="left:24.10px;top:49.50px;font-size:12.4px;line-height:12.4px;color:#424242;transform:scaleX(0.9310);transform-origin:0 0;">File</div><div class="t" style="left:75.30px;top:49.50px;font-size:12.4px;line-height:12.4px;color:#262626;transform:scaleX(1.1005);transform-origin:0 0;-webkit-text-stroke:0.45px #262626;">Home</div><div class="t" style="left:140.00px;top:49.50px;font-size:12.4px;line-height:12.4px;color:#424242;transform:scaleX(1.0319);transform-origin:0 0;">Insert</div><div class="t" style="left:202.80px;top:49.50px;font-size:12.4px;line-height:12.4px;color:#424242;transform:scaleX(1.0225);transform-origin:0 0;">Page Layout</div><div class="t" style="left:303.80px;top:49.50px;font-size:12.4px;line-height:12.4px;color:#424242;transform:scaleX(1.0237);transform-origin:0 0;">Formulas</div><div class="t" style="left:386.00px;top:49.50px;font-size:12.4px;line-height:12.4px;color:#424242;transform:scaleX(1.0309);transform-origin:0 0;">Data</div><div class="t" style="left:442.30px;top:49.50px;font-size:12.4px;line-height:12.4px;color:#424242;transform:scaleX(0.9765);transform-origin:0 0;">Review</div><div class="t" style="left:510.00px;top:49.50px;font-size:12.4px;line-height:12.4px;color:#424242;transform:scaleX(1.0130);transform-origin:0 0;">View</div><div class="t" style="left:565.30px;top:49.50px;font-size:12.4px;line-height:12.4px;color:#424242;transform:scaleX(1.0078);transform-origin:0 0;">Help</div><div class="r" style="left:74.8px;top:64.6px;width:38.2px;height:2.8000000000000114px;background:#217346;border-radius:1px;"></div><svg class="s" style="left:22px;top:76px;" width="34" height="34" viewBox="0 0 34 34"><g stroke="#c2c2c2" stroke-width="1.3" fill="#ececec"><path d="M3.5 4.5 H23 V29 H3.5 Z"/><path d="M8.5 2.5 H19 V8 H8.5 Z" fill="#f0f0f0"/><rect x="16.5" y="14" width="13.5" height="17.5" fill="#f3f3f3"/></g><circle cx="13.7" cy="3" r="1.5" fill="none" stroke="#c2c2c2" stroke-width="1.2"/></svg><div class="t" style="left:23.00px;top:112.50px;font-size:12.4px;line-height:12.4px;color:#a8a8a8;transform:scaleX(0.8515);transform-origin:0 0;">Paste</div><svg class="s" style="left:29.5px;top:129px;" width="12" height="10" viewBox="0 0 12 10"><path d="M3 3.5 L6 6.5 L9 3.5" fill="none" stroke="#b3b3b3" stroke-width="1.2"/></svg><svg class="s" style="left:61px;top:76px;" width="14" height="18" viewBox="0 0 14 18"><g stroke-width="1.2"><path d="M3.3 1 L9.6 12.2 M10.7 1 L4.4 12.2" stroke="#444" fill="none"/><circle cx="4" cy="14.3" r="2.1" stroke="#2a7d96" fill="#cfeaf5"/><circle cx="10" cy="14.3" r="2.1" stroke="#2a7d96" fill="#cfeaf5"/></g></svg><div class="t" style="left:79.80px;top:79.50px;font-size:12.4px;line-height:12.4px;color:#3d3d3d;transform:scaleX(0.9432);transform-origin:0 0;">Cut</div><svg class="s" style="left:59px;top:100px;" width="18" height="18" viewBox="0 0 18 18"><g fill="none" stroke="#333" stroke-width="1.3"><path d="M7.5 3 V1.5 H1.5 V14.5 H7"/><path d="M7.3 4.5 H13 L16.5 8 V16.6 H7.3 Z"/><path d="M9.5 11 H14 M9.5 13.3 H14" stroke-width="1"/></g></svg><div class="t" style="left:79.80px;top:103.70px;font-size:12.4px;line-height:12.4px;color:#3d3d3d;transform:scaleX(0.9397);transform-origin:0 0;">Copy</div><svg class="s" style="left:114.8px;top:104.5px;" width="12" height="10" viewBox="0 0 12 10"><path d="M2.8 3.4 L6 6.6 L9.2 3.4" fill="none" stroke="#555" stroke-width="1.2"/></svg><svg class="s" style="left:59px;top:123px;" width="18" height="18" viewBox="0 0 18 18"><path d="M1.6 9.4 L8.4 5.4 L13 10.4 L8 16.4 Z" fill="#f7e1a6" stroke="#e8944a" stroke-width="1.1" stroke-linejoin="round"/><path d="M4.5 12.2 L10.5 9.8" stroke="#e0a84a" stroke-width="1.3"/><path d="M8.6 4.6 L10.6 2.8 L14.6 7.2 L12.7 9 Z" fill="#fff" stroke="#444" stroke-width="1.1"/><path d="M11.6 4.2 L14.6 1.2 L16.4 3 L13.4 6" fill="#fff" stroke="#444" stroke-width="1.1" stroke-linejoin="round"/></svg><div class="t" style="left:79.80px;top:128.30px;font-size:12.4px;line-height:12.4px;color:#3d3d3d;transform:scaleX(0.9390);transform-origin:0 0;">Format Painter</div><div class="t" style="left:55.60px;top:152.35px;font-size:11.4px;line-height:11.4px;color:#3d3d3d;transform:scaleX(1.0248);transform-origin:0 0;">Clipboard</div><svg class="s" style="left:159.5px;top:153.5px;" width="10" height="10" viewBox="0 0 10 10"><g fill="none" stroke="#555" stroke-width="1"><path d="M0.5 8 V0.5 H8"/><path d="M2.5 2.5 L8.5 8.5 M4.5 8.5 H8.5 V4.5"/></g></svg><div class="r" style="left:171px;top:74px;width:1.1999999999999886px;height:88px;background:#d3d3d3;"></div><div class="r" style="left:180.4px;top:82.4px;width:121.9px;height:21.89999999999999px;background:#fff;box-sizing:border-box;border:1px solid #c8c8c8;"></div><div class="t" style="left:183.70px;top:88.27px;font-size:12.2px;line-height:12.2px;color:#262626;transform:scaleX(0.9487);transform-origin:0 0;">Calibri</div><svg class="s" style="left:290px;top:88.6px;" width="12" height="10" viewBox="0 0 12 10"><path d="M2.6 3.3 L6 6.7 L9.4 3.3" fill="none" stroke="#333" stroke-width="1.2"/></svg><div class="r" style="left:305.4px;top:82.4px;width:42.0px;height:21.89999999999999px;background:#fff;box-sizing:border-box;border:1px solid #c8c8c8;"></div><div class="t" style="left:308.80px;top:88.27px;font-size:12.2px;line-height:12.2px;color:#262626;transform:scaleX(0.7897);transform-origin:0 0;">11</div><svg class="s" style="left:335px;top:88.6px;" width="12" height="10" viewBox="0 0 12 10"><path d="M2.6 3.3 L6 6.7 L9.4 3.3" fill="none" stroke="#333" stroke-width="1.2"/></svg><div class="t" style="left:354.00px;top:83.41px;font-size:17px;line-height:17px;color:#444;transform:scaleX(1.0582);transform-origin:0 0;">A</div><svg class="s" style="left:365px;top:84px;" width="8" height="6" viewBox="0 0 8 6"><path d="M1 4.5 L4 1.5 L7 4.5" fill="none" stroke="#3a9ad9" stroke-width="1.1"/></svg><div class="t" style="left:379.00px;top:85.53px;font-size:14.5px;line-height:14.5px;color:#444;transform:scaleX(1.0856);transform-origin:0 0;">A</div><svg class="s" style="left:388px;top:84px;" width="8" height="6" viewBox="0 0 8 6"><path d="M1 1.5 L4 4.5 L7 1.5" fill="none" stroke="#3a9ad9" stroke-width="1.1"/></svg><div class="r" style="left:180.4px;top:114px;width:21.299999999999983px;height:22.30000000000001px;background:#c8c6c4;box-sizing:border-box;border:1px solid #a3a3a3;"></div><div class="t" style="left:187.30px;top:116.95px;font-size:14px;line-height:14px;color:#3a3a3a;font-weight:bold;transform:scaleX(0.8407);transform-origin:0 0;">B</div><div class="t" style="left:211.50px;top:117.57px;font-size:13.5px;line-height:13.5px;color:#3a3a3a;transform:scaleX(1.8131);transform-origin:0 0;font-style:italic;font-family:"Liberation Serif",serif;">I</div><div class="t" style="left:234.00px;top:117.29px;font-size:13.6px;line-height:13.6px;color:#3a3a3a;transform:scaleX(0.9571);transform-origin:0 0;">U</div><div class="r" style="left:234.2px;top:130.2px;width:8.800000000000011px;height:1.0px;background:#3a3a3a;"></div><svg class="s" style="left:250.8px;top:120px;" width="12" height="10" viewBox="0 0 12 10"><path d="M2.8 3.4 L6 6.6 L9.2 3.4" fill="none" stroke="#555" stroke-width="1.2"/></svg><div class="r" style="left:269.2px;top:114.7px;width:1.0px;height:20.10000000000001px;background:#d0d0d0;"></div><svg class="s" style="left:276px;top:116px;" width="18" height="17" viewBox="0 0 18 17"><g stroke="#444" stroke-width="1" stroke-dasharray="1.2 1.3" fill="none"><path d="M1.5 1.5 H16 M1.5 1.5 V15 M16 1.5 V15 M8.7 1.5 V15 M1.5 8.2 H16"/></g><path d="M1 15.5 H16.5" stroke="#222" stroke-width="1.5"/></svg><svg class="s" style="left:296.3px;top:120px;" width="12" height="10" viewBox="0 0 12 10"><path d="M2.8 3.4 L6 6.6 L9.2 3.4" fill="none" stroke="#555" stroke-width="1.2"/></svg><div class="r" style="left:315.2px;top:114.7px;width:1.0px;height:20.10000000000001px;background:#d0d0d0;"></div><svg class="s" style="left:321px;top:114px;" width="20" height="20" viewBox="0 0 20 20"><path d="M5 7.5 L9.5 3 L14.5 8 L10 12.5 Z" fill="none" stroke="#333" stroke-width="1.2"/><path d="M9.5 3 L8 1.2" stroke="#333" stroke-width="1.2"/><path d="M15.5 9 C16.5 10.5 17 11.5 16 12.5" fill="none" stroke="#2a7fc0" stroke-width="1.5"/></svg><div class="r" style="left:322.4px;top:129.3px;width:17.30000000000001px;height:3.8999999999999773px;background:#f2e200;"></div><svg class="s" style="left:342.5px;top:120px;" width="12" height="10" viewBox="0 0 12 10"><path d="M2.8 3.4 L6 6.6 L9.2 3.4" fill="none" stroke="#555" stroke-width="1.2"/></svg><div class="t" style="left:362.60px;top:115.14px;font-size:14.6px;line-height:14.6px;color:#3a3a3a;transform:scaleX(1.0782);transform-origin:0 0;">A</div><div class="r" style="left:362.6px;top:128.8px;width:15.399999999999977px;height:4.399999999999977px;background:#d81e1e;"></div><svg class="s" style="left:381.2px;top:120px;" width="12" height="10" viewBox="0 0 12 10"><path d="M2.8 3.4 L6 6.6 L9.2 3.4" fill="none" stroke="#555" stroke-width="1.2"/></svg><div class="t" style="left:267.80px;top:152.35px;font-size:11.4px;line-height:11.4px;color:#3d3d3d;">Font</div><svg class="s" style="left:391.5px;top:153.5px;" width="10" height="10" viewBox="0 0 10 10"><g fill="none" stroke="#555" stroke-width="1"><path d="M0.5 8 V0.5 H8"/><path d="M2.5 2.5 L8.5 8.5 M4.5 8.5 H8.5 V4.5"/></g></svg><div class="r" style="left:403.2px;top:74px;width:1.1999999999999886px;height:88px;background:#d3d3d3;"></div><div class="r" style="left:436.4px;top:82.2px;width:21.100000000000023px;height:22.5px;background:#c8c6c4;box-sizing:border-box;border:1px solid #a3a3a3;"></div><div class="r" style="left:416px;top:84.8px;width:13.600000000000023px;height:1.1500000000000057px;background:#3f3f3f;"></div><div class="r" style="left:417.8px;top:88.9px;width:10.0px;height:1.1500000000000057px;background:#3f3f3f;"></div><div class="r" style="left:416px;top:92.9px;width:13.600000000000023px;height:1.1500000000000057px;background:#3f3f3f;"></div><div class="r" style="left:440px;top:87.9px;width:14px;height:1.1500000000000057px;background:#3f3f3f;"></div><div class="r" style="left:442px;top:91.9px;width:10px;height:1.1500000000000057px;background:#3f3f3f;"></div><div class="r" style="left:440px;top:95.9px;width:14px;height:1.1500000000000057px;background:#3f3f3f;"></div><div class="r" style="left:464px;top:91.9px;width:13.800000000000011px;height:1.1500000000000057px;background:#3f3f3f;"></div><div class="r" style="left:466.2px;top:95.9px;width:9.699999999999989px;height:1.1500000000000057px;background:#3f3f3f;"></div><div class="r" style="left:464px;top:99.9px;width:13.800000000000011px;height:1.1500000000000057px;background:#3f3f3f;"></div><div class="r" style="left:486.3px;top:84px;width:1.0px;height:20px;background:#d8d8d8;"></div><svg class="s" style="left:491px;top:82px;" width="22" height="20" viewBox="0 0 22 20"><text x="0" y="0" font-size="11" fill="#333" transform="translate(5 14.5) rotate(-50)" font-family="Liberation Sans">ab</text><path d="M7 17 L18.5 5.5 M14 5.5 H18.5 V10" fill="none" stroke="#2d8fd5" stroke-width="1.2"/></svg><svg class="s" style="left:512px;top:87px;" width="12" height="10" viewBox="0 0 12 10"><path d="M2.8 3.4 L6 6.6 L9.2 3.4" fill="none" stroke="#555" stroke-width="1.2"/></svg><div class="r" style="left:416px;top:117.8px;width:13.600000000000023px;height:1.1500000000000057px;background:#3f3f3f;"></div><div class="r" style="left:416px;top:121.8px;width:9.699999999999989px;height:1.1500000000000057px;background:#3f3f3f;"></div><div class="r" style="left:416px;top:125.9px;width:13.600000000000023px;height:1.1500000000000057px;background:#3f3f3f;"></div><div class="r" style="left:416px;top:129.9px;width:9.699999999999989px;height:1.1500000000000057px;background:#3f3f3f;"></div><div class="r" style="left:436.4px;top:114px;width:21.100000000000023px;height:22.5px;background:#c8c6c4;box-sizing:border-box;border:1px solid #a3a3a3;"></div><div class="r" style="left:440px;top:117.8px;width:14px;height:1.1500000000000057px;background:#3f3f3f;"></div><div class="r" style="left:442px;top:121.8px;width:10px;height:1.1500000000000057px;background:#3f3f3f;"></div><div class="r" style="left:440px;top:125.9px;width:14px;height:1.1500000000000057px;background:#3f3f3f;"></div><div class="r" style="left:442px;top:129.9px;width:10px;height:1.1500000000000057px;background:#3f3f3f;"></div><div class="r" style="left:464px;top:117.8px;width:13.800000000000011px;height:1.1500000000000057px;background:#3f3f3f;"></div><div class="r" style="left:468.1px;top:121.8px;width:9.699999999999989px;height:1.1500000000000057px;background:#3f3f3f;"></div><div class="r" style="left:464px;top:125.9px;width:13.800000000000011px;height:1.1500000000000057px;background:#3f3f3f;"></div><div class="r" style="left:468.1px;top:129.9px;width:9.699999999999989px;height:1.1500000000000057px;background:#3f3f3f;"></div><div class="r" style="left:486.3px;top:115px;width:1.0px;height:20px;background:#d8d8d8;"></div><svg class="s" style="left:494px;top:116px;" width="16" height="17" viewBox="0 0 16 17"><g stroke="#444" stroke-width="1.2"><path d="M1 1.6 H15 M7 5.8 H15 M7 10 H15 M1 14.4 H15"/></g><path d="M6 8 H1.5 M3.8 5.7 L1.5 8 L3.8 10.3" fill="none" stroke="#2d8fd5" stroke-width="1.2"/></svg><svg class="s" style="left:518.5px;top:116px;" width="16" height="17" viewBox="0 0 16 17"><g stroke="#444" stroke-width="1.2"><path d="M1 1.6 H15 M7 5.8 H15 M7 10 H15 M1 14.4 H15"/></g><path d="M1 8 H5.5 M3.2 5.7 L5.5 8 L3.2 10.3" fill="none" stroke="#2d8fd5" stroke-width="1.2"/></svg><div class="r" style="left:541px;top:80px;width:1px;height:60px;background:#d8d8d8;"></div><div class="r" style="left:546px;top:82.2px;width:80.70000000000005px;height:22.5px;background:#c8c6c4;box-sizing:border-box;border:1px solid #a3a3a3;"></div><svg class="s" style="left:549px;top:83px;" width="18" height="18" viewBox="0 0 18 18"><text x="2" y="8" font-size="9.5" fill="#333" font-family="Liberation Sans">ab</text><text x="2" y="16.5" font-size="9.5" fill="#333" font-family="Liberation Sans">c</text><path d="M8 13 H13.5 C16 13 16 8.5 13.5 8.5 H11 M10 11 L8 13 L10 15" fill="none" stroke="#2d8fd5" stroke-width="1.2"/></svg><div class="t" style="left:568.00px;top:88.30px;font-size:12.4px;line-height:12.4px;color:#3d3d3d;transform:scaleX(0.9357);transform-origin:0 0;">Wrap Text</div><svg class="s" style="left:548px;top:117px;" width="17" height="16" viewBox="0 0 17 16"><rect x="1" y="1" width="15" height="14" fill="#fff" stroke="#444" stroke-width="1.1"/><path d="M1 4.5 H16 M1 11.5 H16" stroke="#444" stroke-width="1"/><path d="M3.5 8 H13.5 M5.5 6 L3.5 8 L5.5 10 M11.5 6 L13.5 8 L11.5 10" fill="none" stroke="#2d8fd5" stroke-width="1.2"/></svg><div class="t" style="left:568.00px;top:119.80px;font-size:12.4px;line-height:12.4px;color:#3d3d3d;transform:scaleX(0.9712);transform-origin:0 0;">Merge &amp; Center</div><svg class="s" style="left:661px;top:120px;" width="12" height="10" viewBox="0 0 12 10"><path d="M2.8 3.4 L6 6.6 L9.2 3.4" fill="none" stroke="#555" stroke-width="1.2"/></svg><div class="t" style="left:509.50px;top:152.35px;font-size:11.4px;line-height:11.4px;color:#3d3d3d;transform:scaleX(1.0258);transform-origin:0 0;">Alignment</div><svg class="s" style="left:671.5px;top:153.5px;" width="10" height="10" viewBox="0 0 10 10"><g fill="none" stroke="#555" stroke-width="1"><path d="M0.5 8 V0.5 H8"/><path d="M2.5 2.5 L8.5 8.5 M4.5 8.5 H8.5 V4.5"/></g></svg><div class="r" style="left:683px;top:74px;width:1.2000000000000455px;height:88px;background:#d3d3d3;"></div><div class="r" style="left:692px;top:82.2px;width:108px;height:22.5px;background:#fff;box-sizing:border-box;border:1px solid #c8c8c8;"></div><div class="t" style="left:695.30px;top:87.80px;font-size:12.4px;line-height:12.4px;color:#262626;transform:scaleX(0.8909);transform-origin:0 0;">General</div><svg class="s" style="left:693px;top:116px;" width="20" height="18" viewBox="0 0 20 18"><rect x="1.5" y="3" width="15" height="9" fill="none" stroke="#444" stroke-width="1.1"/><text x="3" y="10.5" font-size="7" fill="#444" font-family="Liberation Sans">00</text><ellipse cx="14.5" cy="10.5" rx="3.5" ry="1.5" fill="#f6d38a" stroke="#e0902a" stroke-width="0.9"/><path d="M11 10.5 V15.5 C11 17.5 18 17.5 18 15.5 V10.5" fill="#f6d38a" stroke="#e0902a" stroke-width="0.9"/></svg><svg class="s" style="left:714px;top:120px;" width="12" height="10" viewBox="0 0 12 10"><path d="M2.8 3.4 L6 6.6 L9.2 3.4" fill="none" stroke="#555" stroke-width="1.2"/></svg><div class="r" style="left:6px;top:166px;width:1394px;height:48px;background:#e6e6e6;"></div><div class="r" style="left:6px;top:166px;width:1394px;height:1px;background:#d9d9d9;"></div><div class="r" style="left:6px;top:167px;width:1394px;height:5px;background:linear-gradient(#dcdcdc,#e6e6e6);"></div><div class="r" style="left:12.3px;top:177.4px;width:101.3px;height:25.19999999999999px;background:#fff;box-sizing:border-box;border:1px solid #cfcfcf;"></div><div class="t" style="left:18.80px;top:184.50px;font-size:13px;line-height:13px;color:#333;transform:scaleX(0.9748);transform-origin:0 0;">A1</div><svg class="s" style="left:103px;top:186px;" width="8" height="5" viewBox="0 0 8 5"><path d="M0.5 0.5 H7.5 L4 4.5 Z" fill="#7a7a7a"/></svg><svg class="s" style="left:127px;top:183px;" width="4" height="14" viewBox="0 0 4 14"><g fill="#9a9a9a"><circle cx="2" cy="2.5" r="1.1"/><circle cx="2" cy="7" r="1.1"/><circle cx="2" cy="11.5" r="1.1"/></g></svg><div class="r" style="left:144.4px;top:177.5px;width:108.9px;height:24.80000000000001px;background:#fff;box-sizing:border-box;border:1px solid #cfcfcf;"></div><svg class="s" style="left:156px;top:183px;" width="14" height="14" viewBox="0 0 14 14"><path d="M2 2 L12 12 M12 2 L2 12" stroke="#b0b0b0" stroke-width="1.4"/></svg><svg class="s" style="left:191px;top:183px;" width="16" height="14" viewBox="0 0 16 14"><path d="M2 7.5 L6 11.5 L14 2.5" fill="none" stroke="#b0b0b0" stroke-width="1.6"/></svg><div class="t" style="left:229.50px;top:183.65px;font-size:14px;line-height:14px;color:#555;transform:scaleX(1.5427);transform-origin:0 0;font-style:italic;font-family:"Liberation Serif",serif;">f</div><div class="t" style="left:234.80px;top:187.53px;font-size:10px;line-height:10px;color:#555;transform:scaleX(1.2000);transform-origin:0 0;font-style:italic;font-family:"Liberation Serif",serif;">x</div><div class="r" style="left:257.4px;top:177.5px;width:1142.6px;height:24.80000000000001px;background:#fff;box-sizing:border-box;border:1px solid #cfcfcf;"></div><div class="t" style="left:269.50px;top:184.50px;font-size:13px;line-height:13px;color:#333;transform:scaleX(0.9952);transform-origin:0 0;">ID Pesanan</div><div class="r" style="left:7px;top:214px;width:1393px;height:478px;background:#fff;"></div><div class="r" style="left:7px;top:214px;width:1393px;height:18.5px;background:#e9e9e9;"></div><div class="r" style="left:7px;top:231.5px;width:1393px;height:1.0px;background:#c6c6c6;"></div><svg class="s" style="left:17px;top:217px;" width="13" height="13" viewBox="0 0 13 13"><path d="M12 0.5 V12 H0.5 Z" fill="#c2c2c2"/></svg><div class="r" style="left:178.1px;top:214px;width:1.0px;height:18.5px;background:#cdcdcd;"></div><div class="t" style="left:101.52px;top:217.50px;font-size:13px;line-height:13px;color:#111;transform:scaleX(0.9300);transform-origin:0 0;-webkit-text-stroke:0.2px #111;">A</div><div class="r" style="left:289.1px;top:214px;width:1.0px;height:18.5px;background:#cdcdcd;"></div><div class="t" style="left:230.07px;top:217.50px;font-size:13px;line-height:13px;color:#111;transform:scaleX(0.9300);transform-origin:0 0;-webkit-text-stroke:0.2px #111;">B</div><div class="r" style="left:392.9px;top:214px;width:1.0px;height:18.5px;background:#cdcdcd;"></div><div class="t" style="left:337.13px;top:217.50px;font-size:13px;line-height:13px;color:#111;transform:scaleX(0.9300);transform-origin:0 0;-webkit-text-stroke:0.2px #111;">C</div><div class="r" style="left:497.1px;top:214px;width:1.0px;height:18.5px;background:#cdcdcd;"></div><div class="t" style="left:441.13px;top:217.50px;font-size:13px;line-height:13px;color:#111;transform:scaleX(0.9300);transform-origin:0 0;-webkit-text-stroke:0.2px #111;">D</div><div class="r" style="left:636.2px;top:214px;width:1.0px;height:18.5px;background:#cdcdcd;"></div><div class="t" style="left:563.12px;top:217.50px;font-size:13px;line-height:13px;color:#111;transform:scaleX(0.9300);transform-origin:0 0;-webkit-text-stroke:0.2px #111;">E</div><div class="r" style="left:899.5px;top:214px;width:1.0px;height:18.5px;background:#cdcdcd;"></div><div class="t" style="left:764.66px;top:217.50px;font-size:13px;line-height:13px;color:#111;transform:scaleX(0.9300);transform-origin:0 0;-webkit-text-stroke:0.2px #111;">F</div><div class="r" style="left:7px;top:232.5px;width:25.5px;height:459.5px;background:#e9e9e9;"></div><div class="r" style="left:32px;top:214px;width:1px;height:478px;background:#a3a3a3;"></div><div class="r" style="left:7px;top:265.0px;width:25px;height:1.0px;background:#d0d0d0;"></div><div class="t" style="left:16.37px;top:250.30px;font-size:13px;line-height:13px;color:#111;transform:scaleX(0.9500);transform-origin:0 0;-webkit-text-stroke:0.2px #111;">1</div><div class="r" style="left:7px;top:285.0px;width:25px;height:1.0px;background:#d0d0d0;"></div><div class="t" style="left:16.37px;top:270.30px;font-size:13px;line-height:13px;color:#111;transform:scaleX(0.9500);transform-origin:0 0;-webkit-text-stroke:0.2px #111;">2</div><div class="r" style="left:7px;top:305.0px;width:25px;height:1.0px;background:#d0d0d0;"></div><div class="t" style="left:16.37px;top:290.30px;font-size:13px;line-height:13px;color:#111;transform:scaleX(0.9500);transform-origin:0 0;-webkit-text-stroke:0.2px #111;">3</div><div class="r" style="left:7px;top:325.0px;width:25px;height:1.0px;background:#d0d0d0;"></div><div class="t" style="left:16.37px;top:310.30px;font-size:13px;line-height:13px;color:#111;transform:scaleX(0.9500);transform-origin:0 0;-webkit-text-stroke:0.2px #111;">4</div><div class="r" style="left:7px;top:345.0px;width:25px;height:1.0px;background:#d0d0d0;"></div><div class="t" style="left:16.37px;top:330.30px;font-size:13px;line-height:13px;color:#111;transform:scaleX(0.9500);transform-origin:0 0;-webkit-text-stroke:0.2px #111;">5</div><div class="r" style="left:7px;top:365.0px;width:25px;height:1.0px;background:#d0d0d0;"></div><div class="t" style="left:16.37px;top:350.30px;font-size:13px;line-height:13px;color:#111;transform:scaleX(0.9500);transform-origin:0 0;-webkit-text-stroke:0.2px #111;">6</div><div class="r" style="left:7px;top:385.0px;width:25px;height:1.0px;background:#d0d0d0;"></div><div class="t" style="left:16.37px;top:370.30px;font-size:13px;line-height:13px;color:#111;transform:scaleX(0.9500);transform-origin:0 0;-webkit-text-stroke:0.2px #111;">7</div><div class="r" style="left:7px;top:405.0px;width:25px;height:1.0px;background:#d0d0d0;"></div><div class="t" style="left:16.37px;top:390.30px;font-size:13px;line-height:13px;color:#111;transform:scaleX(0.9500);transform-origin:0 0;-webkit-text-stroke:0.2px #111;">8</div><div class="r" style="left:7px;top:425.0px;width:25px;height:1.0px;background:#d0d0d0;"></div><div class="t" style="left:16.37px;top:410.30px;font-size:13px;line-height:13px;color:#111;transform:scaleX(0.9500);transform-origin:0 0;-webkit-text-stroke:0.2px #111;">9</div><div class="r" style="left:7px;top:445.0px;width:25px;height:1.0px;background:#d0d0d0;"></div><div class="t" style="left:12.93px;top:430.30px;font-size:13px;line-height:13px;color:#111;transform:scaleX(0.9500);transform-origin:0 0;-webkit-text-stroke:0.2px #111;">10</div><div class="r" style="left:7px;top:465.0px;width:25px;height:1.0px;background:#d0d0d0;"></div><div class="t" style="left:13.39px;top:450.30px;font-size:13px;line-height:13px;color:#111;transform:scaleX(0.9500);transform-origin:0 0;-webkit-text-stroke:0.2px #111;">11</div><div class="r" style="left:7px;top:485.0px;width:25px;height:1.0px;background:#d0d0d0;"></div><div class="t" style="left:12.93px;top:470.30px;font-size:13px;line-height:13px;color:#111;transform:scaleX(0.9500);transform-origin:0 0;-webkit-text-stroke:0.2px #111;">12</div><div class="r" style="left:7px;top:505.0px;width:25px;height:1.0px;background:#d0d0d0;"></div><div class="t" style="left:12.93px;top:490.30px;font-size:13px;line-height:13px;color:#111;transform:scaleX(0.9500);transform-origin:0 0;-webkit-text-stroke:0.2px #111;">13</div><div class="r" style="left:7px;top:525.0px;width:25px;height:1.0px;background:#d0d0d0;"></div><div class="t" style="left:12.93px;top:510.30px;font-size:13px;line-height:13px;color:#111;transform:scaleX(0.9500);transform-origin:0 0;-webkit-text-stroke:0.2px #111;">14</div><div class="r" style="left:7px;top:545.0px;width:25px;height:1.0px;background:#d0d0d0;"></div><div class="t" style="left:12.93px;top:530.30px;font-size:13px;line-height:13px;color:#111;transform:scaleX(0.9500);transform-origin:0 0;-webkit-text-stroke:0.2px #111;">15</div><div class="r" style="left:7px;top:565.0px;width:25px;height:1.0px;background:#d0d0d0;"></div><div class="t" style="left:12.93px;top:550.30px;font-size:13px;line-height:13px;color:#111;transform:scaleX(0.9500);transform-origin:0 0;-webkit-text-stroke:0.2px #111;">16</div><div class="r" style="left:7px;top:585.0px;width:25px;height:1.0px;background:#d0d0d0;"></div><div class="t" style="left:12.93px;top:570.30px;font-size:13px;line-height:13px;color:#111;transform:scaleX(0.9500);transform-origin:0 0;-webkit-text-stroke:0.2px #111;">17</div><div class="r" style="left:7px;top:605.0px;width:25px;height:1.0px;background:#d0d0d0;"></div><div class="t" style="left:12.93px;top:590.30px;font-size:13px;line-height:13px;color:#111;transform:scaleX(0.9500);transform-origin:0 0;-webkit-text-stroke:0.2px #111;">18</div><div class="r" style="left:7px;top:625.0px;width:25px;height:1.0px;background:#d0d0d0;"></div><div class="t" style="left:12.93px;top:610.30px;font-size:13px;line-height:13px;color:#111;transform:scaleX(0.9500);transform-origin:0 0;-webkit-text-stroke:0.2px #111;">19</div><div class="r" style="left:7px;top:645.0px;width:25px;height:1.0px;background:#d0d0d0;"></div><div class="t" style="left:12.93px;top:630.30px;font-size:13px;line-height:13px;color:#111;transform:scaleX(0.9500);transform-origin:0 0;-webkit-text-stroke:0.2px #111;">20</div><div class="r" style="left:7px;top:665.0px;width:25px;height:1.0px;background:#d0d0d0;"></div><div class="t" style="left:12.93px;top:650.30px;font-size:13px;line-height:13px;color:#111;transform:scaleX(0.9500);transform-origin:0 0;-webkit-text-stroke:0.2px #111;">21</div><div class="r" style="left:7px;top:685.0px;width:25px;height:1.0px;background:#d0d0d0;"></div><div class="t" style="left:12.93px;top:670.30px;font-size:13px;line-height:13px;color:#111;transform:scaleX(0.9500);transform-origin:0 0;-webkit-text-stroke:0.2px #111;">22</div><div class="r" style="left:32.5px;top:232.5px;width:867.5px;height:33.0px;background:#1f4e79;"></div><div class="t" style="left:71.90px;top:243.26px;font-size:13.4px;line-height:13.4px;color:#fff;font-weight:bold;transform:scaleX(0.9317);transform-origin:0 0;">ID Pesanan</div><div class="r" style="left:161.1px;top:247.8px;width:16.0px;height:15.800000000000011px;background:#fbfbfb;box-sizing:border-box;border:1px solid #c9c9c9;"></div><svg class="s" style="left:165.1px;top:253px;" width="8" height="5" viewBox="0 0 8 5"><path d="M0 0 H8 L4 4.5 Z" fill="#555"/></svg><div class="t" style="left:221.80px;top:243.26px;font-size:13.4px;line-height:13.4px;color:#fff;font-weight:bold;transform:scaleX(0.8695);transform-origin:0 0;">SKU</div><div class="r" style="left:272.1px;top:247.8px;width:16.0px;height:15.800000000000011px;background:#fbfbfb;box-sizing:border-box;border:1px solid #c9c9c9;"></div><svg class="s" style="left:276.1px;top:253px;" width="8" height="5" viewBox="0 0 8 5"><path d="M0 0 H8 L4 4.5 Z" fill="#555"/></svg><div class="t" style="left:318.15px;top:243.26px;font-size:13.4px;line-height:13.4px;color:#fff;font-weight:bold;transform:scaleX(0.9272);transform-origin:0 0;">Tanggal</div><div class="r" style="left:375.9px;top:247.8px;width:16.0px;height:15.800000000000011px;background:#fbfbfb;box-sizing:border-box;border:1px solid #c9c9c9;"></div><svg class="s" style="left:379.9px;top:253px;" width="8" height="5" viewBox="0 0 8 5"><path d="M0 0 H8 L4 4.5 Z" fill="#555"/></svg><div class="t" style="left:421.25px;top:243.26px;font-size:13.4px;line-height:13.4px;color:#fff;font-weight:bold;transform:scaleX(0.9726);transform-origin:0 0;">Kuantiti</div><div class="r" style="left:480.1px;top:247.8px;width:16.0px;height:15.800000000000011px;background:#fbfbfb;box-sizing:border-box;border:1px solid #c9c9c9;"></div><svg class="s" style="left:484.1px;top:253px;" width="8" height="5" viewBox="0 0 8 5"><path d="M0 0 H8 L4 4.5 Z" fill="#555"/></svg><div class="t" style="left:526.30px;top:243.26px;font-size:13.4px;line-height:13.4px;color:#fff;font-weight:bold;transform:scaleX(0.8991);transform-origin:0 0;">Harga Per Pcs</div><div class="r" style="left:619.2px;top:247.8px;width:16.0px;height:15.800000000000011px;background:#fbfbfb;box-sizing:border-box;border:1px solid #c9c9c9;"></div><svg class="s" style="left:623.2px;top:253px;" width="8" height="5" viewBox="0 0 8 5"><path d="M0 0 H8 L4 4.5 Z" fill="#555"/></svg><div class="t" style="left:667.80px;top:243.26px;font-size:13.4px;line-height:13.4px;color:#fff;font-weight:bold;transform:scaleX(0.9285);transform-origin:0 0;">Subtotal Sebelum Diskon</div><div class="t" style="left:34.80px;top:271.03px;font-size:12.6px;line-height:12.6px;color:#000;transform:scaleX(0.9967);transform-origin:0 0;-webkit-text-stroke:0.25px #000;">580904030220354571</div><div class="t" style="left:181.20px;top:271.03px;font-size:12.6px;line-height:12.6px;color:#000;transform:scaleX(1.0256);transform-origin:0 0;-webkit-text-stroke:0.25px #000;">PRD-54148-MVW</div><div class="t" style="left:292.20px;top:271.03px;font-size:12.6px;line-height:12.6px;color:#000;transform:scaleX(1.0530);transform-origin:0 0;-webkit-text-stroke:0.25px #000;">31/10/2025</div><div class="t" style="left:486.99px;top:271.03px;font-size:12.6px;line-height:12.6px;color:#000;-webkit-text-stroke:0.25px #000;">8</div><div class="t" style="left:579.59px;top:271.03px;font-size:12.6px;line-height:12.6px;color:#000;-webkit-text-stroke:0.25px #000;">Rp11.500</div><div class="t" style="left:34.80px;top:291.03px;font-size:12.6px;line-height:12.6px;color:#000;transform:scaleX(0.9967);transform-origin:0 0;-webkit-text-stroke:0.25px #000;">580893669230348171</div><div class="t" style="left:181.20px;top:291.03px;font-size:12.6px;line-height:12.6px;color:#000;transform:scaleX(0.9699);transform-origin:0 0;-webkit-text-stroke:0.25px #000;">PRD-68864-REQ</div><div class="t" style="left:292.20px;top:291.03px;font-size:12.6px;line-height:12.6px;color:#000;transform:scaleX(1.0530);transform-origin:0 0;-webkit-text-stroke:0.25px #000;">31/10/2025</div><div class="t" style="left:486.99px;top:291.03px;font-size:12.6px;line-height:12.6px;color:#000;-webkit-text-stroke:0.25px #000;">2</div><div class="t" style="left:585.67px;top:291.03px;font-size:12.6px;line-height:12.6px;color:#000;-webkit-text-stroke:0.25px #000;">Rp6.500</div><div class="t" style="left:34.80px;top:311.03px;font-size:12.6px;line-height:12.6px;color:#000;transform:scaleX(0.9967);transform-origin:0 0;-webkit-text-stroke:0.25px #000;">580833999605630955</div><div class="t" style="left:181.20px;top:311.03px;font-size:12.6px;line-height:12.6px;color:#000;transform:scaleX(0.9741);transform-origin:0 0;-webkit-text-stroke:0.25px #000;">PRD-52789-ZLD</div><div class="t" style="left:292.20px;top:311.03px;font-size:12.6px;line-height:12.6px;color:#000;transform:scaleX(1.0530);transform-origin:0 0;-webkit-text-stroke:0.25px #000;">30/10/2025</div><div class="t" style="left:486.99px;top:311.03px;font-size:12.6px;line-height:12.6px;color:#000;-webkit-text-stroke:0.25px #000;">1</div><div class="t" style="left:578.66px;top:311.03px;font-size:12.6px;line-height:12.6px;color:#000;-webkit-text-stroke:0.25px #000;">Rp43.762</div><div class="t" style="left:34.80px;top:331.03px;font-size:12.6px;line-height:12.6px;color:#000;transform:scaleX(0.9967);transform-origin:0 0;-webkit-text-stroke:0.25px #000;">580833999605630955</div><div class="t" style="left:181.20px;top:331.03px;font-size:12.6px;line-height:12.6px;color:#000;transform:scaleX(0.9740);transform-origin:0 0;-webkit-text-stroke:0.25px #000;">PRD-86764-LOL</div><div class="t" style="left:292.20px;top:331.03px;font-size:12.6px;line-height:12.6px;color:#000;transform:scaleX(1.0530);transform-origin:0 0;-webkit-text-stroke:0.25px #000;">30/10/2025</div><div class="t" style="left:486.99px;top:331.03px;font-size:12.6px;line-height:12.6px;color:#000;-webkit-text-stroke:0.25px #000;">1</div><div class="t" style="left:578.66px;top:331.03px;font-size:12.6px;line-height:12.6px;color:#000;-webkit-text-stroke:0.25px #000;">Rp63.838</div><div class="t" style="left:34.80px;top:351.03px;font-size:12.6px;line-height:12.6px;color:#000;transform:scaleX(0.9967);transform-origin:0 0;-webkit-text-stroke:0.25px #000;">580918353221747943</div><div class="t" style="left:181.20px;top:351.03px;font-size:12.6px;line-height:12.6px;color:#000;transform:scaleX(0.9741);transform-origin:0 0;-webkit-text-stroke:0.25px #000;">PRD-52789-ZLD</div><div class="t" style="left:292.20px;top:351.03px;font-size:12.6px;line-height:12.6px;color:#000;transform:scaleX(1.0530);transform-origin:0 0;-webkit-text-stroke:0.25px #000;">28/10/2025</div><div class="t" style="left:486.99px;top:351.03px;font-size:12.6px;line-height:12.6px;color:#000;-webkit-text-stroke:0.25px #000;">2</div><div class="t" style="left:578.66px;top:351.03px;font-size:12.6px;line-height:12.6px;color:#000;-webkit-text-stroke:0.25px #000;">Rp45.100</div><div class="t" style="left:34.80px;top:371.03px;font-size:12.6px;line-height:12.6px;color:#000;transform:scaleX(0.9967);transform-origin:0 0;-webkit-text-stroke:0.25px #000;">580832585245624063</div><div class="t" style="left:181.20px;top:371.03px;font-size:12.6px;line-height:12.6px;color:#000;transform:scaleX(0.9741);transform-origin:0 0;-webkit-text-stroke:0.25px #000;">PRD-52789-ZLD</div><div class="t" style="left:292.20px;top:371.03px;font-size:12.6px;line-height:12.6px;color:#000;transform:scaleX(1.0530);transform-origin:0 0;-webkit-text-stroke:0.25px #000;">27/10/2025</div><div class="t" style="left:486.99px;top:371.03px;font-size:12.6px;line-height:12.6px;color:#000;-webkit-text-stroke:0.25px #000;">1</div><div class="t" style="left:578.66px;top:371.03px;font-size:12.6px;line-height:12.6px;color:#000;-webkit-text-stroke:0.25px #000;">Rp45.100</div><div class="t" style="left:34.80px;top:391.03px;font-size:12.6px;line-height:12.6px;color:#000;transform:scaleX(0.9967);transform-origin:0 0;-webkit-text-stroke:0.25px #000;">580879215575794878</div><div class="t" style="left:181.20px;top:391.03px;font-size:12.6px;line-height:12.6px;color:#000;transform:scaleX(1.0199);transform-origin:0 0;-webkit-text-stroke:0.25px #000;">PRD-88779-OMD</div><div class="t" style="left:292.20px;top:391.03px;font-size:12.6px;line-height:12.6px;color:#000;transform:scaleX(1.0530);transform-origin:0 0;-webkit-text-stroke:0.25px #000;">26/10/2025</div><div class="t" style="left:486.99px;top:391.03px;font-size:12.6px;line-height:12.6px;color:#000;-webkit-text-stroke:0.25px #000;">1</div><div class="t" style="left:578.66px;top:391.03px;font-size:12.6px;line-height:12.6px;color:#000;-webkit-text-stroke:0.25px #000;">Rp37.641</div><div class="t" style="left:34.80px;top:411.03px;font-size:12.6px;line-height:12.6px;color:#000;transform:scaleX(0.9967);transform-origin:0 0;-webkit-text-stroke:0.25px #000;">580879215575794878</div><div class="t" style="left:181.20px;top:411.03px;font-size:12.6px;line-height:12.6px;color:#000;transform:scaleX(0.9774);transform-origin:0 0;-webkit-text-stroke:0.25px #000;">PRD-71901-BTP</div><div class="t" style="left:292.20px;top:411.03px;font-size:12.6px;line-height:12.6px;color:#000;transform:scaleX(1.0530);transform-origin:0 0;-webkit-text-stroke:0.25px #000;">26/10/2025</div><div class="t" style="left:486.99px;top:411.03px;font-size:12.6px;line-height:12.6px;color:#000;-webkit-text-stroke:0.25px #000;">1</div><div class="t" style="left:578.66px;top:411.03px;font-size:12.6px;line-height:12.6px;color:#000;-webkit-text-stroke:0.25px #000;">Rp14.763</div><div class="t" style="left:34.80px;top:431.03px;font-size:12.6px;line-height:12.6px;color:#000;transform:scaleX(0.9967);transform-origin:0 0;-webkit-text-stroke:0.25px #000;">580879215575794878</div><div class="t" style="left:181.20px;top:431.03px;font-size:12.6px;line-height:12.6px;color:#000;transform:scaleX(1.0048);transform-origin:0 0;-webkit-text-stroke:0.25px #000;">PRD-17821-MLP</div><div class="t" style="left:292.20px;top:431.03px;font-size:12.6px;line-height:12.6px;color:#000;transform:scaleX(1.0530);transform-origin:0 0;-webkit-text-stroke:0.25px #000;">26/10/2025</div><div class="t" style="left:486.99px;top:431.03px;font-size:12.6px;line-height:12.6px;color:#000;-webkit-text-stroke:0.25px #000;">2</div><div class="t" style="left:578.66px;top:431.03px;font-size:12.6px;line-height:12.6px;color:#000;-webkit-text-stroke:0.25px #000;">Rp21.098</div><div class="t" style="left:34.80px;top:451.03px;font-size:12.6px;line-height:12.6px;color:#000;transform:scaleX(0.9967);transform-origin:0 0;-webkit-text-stroke:0.25px #000;">580864049513661589</div><div class="t" style="left:181.20px;top:451.03px;font-size:12.6px;line-height:12.6px;color:#000;transform:scaleX(0.9741);transform-origin:0 0;-webkit-text-stroke:0.25px #000;">PRD-52789-ZLD</div><div class="t" style="left:292.20px;top:451.03px;font-size:12.6px;line-height:12.6px;color:#000;transform:scaleX(1.0530);transform-origin:0 0;-webkit-text-stroke:0.25px #000;">26/10/2025</div><div class="t" style="left:486.99px;top:451.03px;font-size:12.6px;line-height:12.6px;color:#000;-webkit-text-stroke:0.25px #000;">1</div><div class="t" style="left:578.66px;top:451.03px;font-size:12.6px;line-height:12.6px;color:#000;-webkit-text-stroke:0.25px #000;">Rp45.100</div><div class="t" style="left:34.80px;top:471.03px;font-size:12.6px;line-height:12.6px;color:#000;transform:scaleX(0.9967);transform-origin:0 0;-webkit-text-stroke:0.25px #000;">580864028864120417</div><div class="t" style="left:181.20px;top:471.03px;font-size:12.6px;line-height:12.6px;color:#000;transform:scaleX(0.9699);transform-origin:0 0;-webkit-text-stroke:0.25px #000;">PRD-68864-REQ</div><div class="t" style="left:292.20px;top:471.03px;font-size:12.6px;line-height:12.6px;color:#000;transform:scaleX(1.0530);transform-origin:0 0;-webkit-text-stroke:0.25px #000;">26/10/2025</div><div class="t" style="left:486.99px;top:471.03px;font-size:12.6px;line-height:12.6px;color:#000;-webkit-text-stroke:0.25px #000;">1</div><div class="t" style="left:585.67px;top:471.03px;font-size:12.6px;line-height:12.6px;color:#000;-webkit-text-stroke:0.25px #000;">Rp6.500</div><div class="t" style="left:34.80px;top:491.03px;font-size:12.6px;line-height:12.6px;color:#000;transform:scaleX(0.9967);transform-origin:0 0;-webkit-text-stroke:0.25px #000;">580852375874406066</div><div class="t" style="left:181.20px;top:491.03px;font-size:12.6px;line-height:12.6px;color:#000;transform:scaleX(0.9666);transform-origin:0 0;-webkit-text-stroke:0.25px #000;">PRD-23066-RSD</div><div class="t" style="left:292.20px;top:491.03px;font-size:12.6px;line-height:12.6px;color:#000;transform:scaleX(1.0530);transform-origin:0 0;-webkit-text-stroke:0.25px #000;">26/10/2025</div><div class="t" style="left:486.99px;top:491.03px;font-size:12.6px;line-height:12.6px;color:#000;-webkit-text-stroke:0.25px #000;">5</div><div class="t" style="left:578.66px;top:491.03px;font-size:12.6px;line-height:12.6px;color:#000;-webkit-text-stroke:0.25px #000;">Rp52.500</div><div class="t" style="left:34.80px;top:511.03px;font-size:12.6px;line-height:12.6px;color:#000;transform:scaleX(0.9967);transform-origin:0 0;-webkit-text-stroke:0.25px #000;">580783939262252368</div><div class="t" style="left:181.20px;top:511.03px;font-size:12.6px;line-height:12.6px;color:#000;transform:scaleX(0.9872);transform-origin:0 0;-webkit-text-stroke:0.25px #000;">PRD-92972-DXH</div><div class="t" style="left:292.20px;top:511.03px;font-size:12.6px;line-height:12.6px;color:#000;transform:scaleX(1.0530);transform-origin:0 0;-webkit-text-stroke:0.25px #000;">26/10/2025</div><div class="t" style="left:486.99px;top:511.03px;font-size:12.6px;line-height:12.6px;color:#000;-webkit-text-stroke:0.25px #000;">1</div><div class="t" style="left:571.65px;top:511.03px;font-size:12.6px;line-height:12.6px;color:#000;-webkit-text-stroke:0.25px #000;">Rp276.100</div><div class="t" style="left:34.80px;top:531.03px;font-size:12.6px;line-height:12.6px;color:#000;transform:scaleX(0.9967);transform-origin:0 0;-webkit-text-stroke:0.25px #000;">580869307340523028</div><div class="t" style="left:181.20px;top:531.03px;font-size:12.6px;line-height:12.6px;color:#000;transform:scaleX(0.9634);transform-origin:0 0;-webkit-text-stroke:0.25px #000;">PRD-44537-BJR</div><div class="t" style="left:292.20px;top:531.03px;font-size:12.6px;line-height:12.6px;color:#000;transform:scaleX(1.0530);transform-origin:0 0;-webkit-text-stroke:0.25px #000;">25/10/2025</div><div class="t" style="left:486.99px;top:531.03px;font-size:12.6px;line-height:12.6px;color:#000;-webkit-text-stroke:0.25px #000;">1</div><div class="t" style="left:578.66px;top:531.03px;font-size:12.6px;line-height:12.6px;color:#000;-webkit-text-stroke:0.25px #000;">Rp78.500</div><div class="t" style="left:34.80px;top:551.03px;font-size:12.6px;line-height:12.6px;color:#000;transform:scaleX(0.9967);transform-origin:0 0;-webkit-text-stroke:0.25px #000;">580830455980132295</div><div class="t" style="left:181.20px;top:551.03px;font-size:12.6px;line-height:12.6px;color:#000;transform:scaleX(0.9841);transform-origin:0 0;-webkit-text-stroke:0.25px #000;">PRD-87121-VQZ</div><div class="t" style="left:292.20px;top:551.03px;font-size:12.6px;line-height:12.6px;color:#000;transform:scaleX(1.0530);transform-origin:0 0;-webkit-text-stroke:0.25px #000;">25/10/2025</div><div class="t" style="left:486.99px;top:551.03px;font-size:12.6px;line-height:12.6px;color:#000;-webkit-text-stroke:0.25px #000;">1</div><div class="t" style="left:571.65px;top:551.03px;font-size:12.6px;line-height:12.6px;color:#000;-webkit-text-stroke:0.25px #000;">Rp196.352</div><div class="t" style="left:34.80px;top:571.03px;font-size:12.6px;line-height:12.6px;color:#000;transform:scaleX(0.9967);transform-origin:0 0;-webkit-text-stroke:0.25px #000;">580830455980132295</div><div class="t" style="left:181.20px;top:571.03px;font-size:12.6px;line-height:12.6px;color:#000;transform:scaleX(0.9862);transform-origin:0 0;-webkit-text-stroke:0.25px #000;">PRD-91421-LNI</div><div class="t" style="left:292.20px;top:571.03px;font-size:12.6px;line-height:12.6px;color:#000;transform:scaleX(1.0530);transform-origin:0 0;-webkit-text-stroke:0.25px #000;">25/10/2025</div><div class="t" style="left:486.99px;top:571.03px;font-size:12.6px;line-height:12.6px;color:#000;-webkit-text-stroke:0.25px #000;">1</div><div class="t" style="left:578.66px;top:571.03px;font-size:12.6px;line-height:12.6px;color:#000;-webkit-text-stroke:0.25px #000;">Rp27.248</div><div class="t" style="left:34.80px;top:591.03px;font-size:12.6px;line-height:12.6px;color:#000;transform:scaleX(0.9967);transform-origin:0 0;-webkit-text-stroke:0.25px #000;">580763122382243123</div><div class="t" style="left:181.20px;top:591.03px;font-size:12.6px;line-height:12.6px;color:#000;transform:scaleX(0.9741);transform-origin:0 0;-webkit-text-stroke:0.25px #000;">PRD-52789-ZLD</div><div class="t" style="left:292.20px;top:591.03px;font-size:12.6px;line-height:12.6px;color:#000;transform:scaleX(1.0530);transform-origin:0 0;-webkit-text-stroke:0.25px #000;">25/10/2025</div><div class="t" style="left:486.99px;top:591.03px;font-size:12.6px;line-height:12.6px;color:#000;-webkit-text-stroke:0.25px #000;">4</div><div class="t" style="left:578.66px;top:591.03px;font-size:12.6px;line-height:12.6px;color:#000;-webkit-text-stroke:0.25px #000;">Rp45.100</div><div class="t" style="left:34.80px;top:611.03px;font-size:12.6px;line-height:12.6px;color:#000;transform:scaleX(0.9967);transform-origin:0 0;-webkit-text-stroke:0.25px #000;">580855960908236043</div><div class="t" style="left:181.20px;top:611.03px;font-size:12.6px;line-height:12.6px;color:#000;-webkit-text-stroke:0.25px #000;">PRD-22405-DWV</div><div class="t" style="left:292.20px;top:611.03px;font-size:12.6px;line-height:12.6px;color:#000;transform:scaleX(1.0530);transform-origin:0 0;-webkit-text-stroke:0.25px #000;">24/10/2025</div><div class="t" style="left:486.99px;top:611.03px;font-size:12.6px;line-height:12.6px;color:#000;-webkit-text-stroke:0.25px #000;">1</div><div class="t" style="left:578.66px;top:611.03px;font-size:12.6px;line-height:12.6px;color:#000;-webkit-text-stroke:0.25px #000;">Rp14.500</div><div class="t" style="left:34.80px;top:631.03px;font-size:12.6px;line-height:12.6px;color:#000;transform:scaleX(0.9967);transform-origin:0 0;-webkit-text-stroke:0.25px #000;">580854091571693102</div><div class="t" style="left:181.20px;top:631.03px;font-size:12.6px;line-height:12.6px;color:#000;transform:scaleX(0.9699);transform-origin:0 0;-webkit-text-stroke:0.25px #000;">PRD-68864-REQ</div><div class="t" style="left:292.20px;top:631.03px;font-size:12.6px;line-height:12.6px;color:#000;transform:scaleX(1.0530);transform-origin:0 0;-webkit-text-stroke:0.25px #000;">24/10/2025</div><div class="t" style="left:486.99px;top:631.03px;font-size:12.6px;line-height:12.6px;color:#000;-webkit-text-stroke:0.25px #000;">1</div><div class="t" style="left:585.67px;top:631.03px;font-size:12.6px;line-height:12.6px;color:#000;-webkit-text-stroke:0.25px #000;">Rp6.500</div><div class="t" style="left:34.80px;top:651.03px;font-size:12.6px;line-height:12.6px;color:#000;transform:scaleX(0.9967);transform-origin:0 0;-webkit-text-stroke:0.25px #000;">580834337120486660</div><div class="t" style="left:181.20px;top:651.03px;font-size:12.6px;line-height:12.6px;color:#000;transform:scaleX(0.9741);transform-origin:0 0;-webkit-text-stroke:0.25px #000;">PRD-52789-ZLD</div><div class="t" style="left:292.20px;top:651.03px;font-size:12.6px;line-height:12.6px;color:#000;transform:scaleX(1.0530);transform-origin:0 0;-webkit-text-stroke:0.25px #000;">24/10/2025</div><div class="t" style="left:486.99px;top:651.03px;font-size:12.6px;line-height:12.6px;color:#000;-webkit-text-stroke:0.25px #000;">1</div><div class="t" style="left:578.66px;top:651.03px;font-size:12.6px;line-height:12.6px;color:#000;-webkit-text-stroke:0.25px #000;">Rp45.100</div><div class="t" style="left:34.80px;top:671.03px;font-size:12.6px;line-height:12.6px;color:#000;transform:scaleX(0.9967);transform-origin:0 0;-webkit-text-stroke:0.25px #000;">580827831045686914</div><div class="t" style="left:181.20px;top:671.03px;font-size:12.6px;line-height:12.6px;color:#000;transform:scaleX(0.9862);transform-origin:0 0;-webkit-text-stroke:0.25px #000;">PRD-91421-LNI</div><div class="t" style="left:292.20px;top:671.03px;font-size:12.6px;line-height:12.6px;color:#000;transform:scaleX(1.0530);transform-origin:0 0;-webkit-text-stroke:0.25px #000;">24/10/2025</div><div class="t" style="left:486.99px;top:671.03px;font-size:12.6px;line-height:12.6px;color:#000;-webkit-text-stroke:0.25px #000;">1</div><div class="t" style="left:578.66px;top:671.03px;font-size:12.6px;line-height:12.6px;color:#000;-webkit-text-stroke:0.25px #000;">Rp28.500</div><div class="r" style="left:308.1px;top:690.0px;width:1.3000000000000114px;height:2.5px;background:#444;"></div><div class="r" style="left:329.1px;top:690.0px;width:1.3000000000000114px;height:2.5px;background:#444;"></div><div class="r" style="left:32.5px;top:232.0px;width:867.5px;height:1.0px;background:#000;"></div><div class="r" style="left:32.5px;top:265.0px;width:867.5px;height:1.0px;background:#000;"></div><div class="r" style="left:32.5px;top:285.0px;width:867.5px;height:1.0px;background:#000;"></div><div class="r" style="left:32.5px;top:305.0px;width:867.5px;height:1.0px;background:#000;"></div><div class="r" style="left:32.5px;top:325.0px;width:867.5px;height:1.0px;background:#000;"></div><div class="r" style="left:32.5px;top:345.0px;width:867.5px;height:1.0px;background:#000;"></div><div class="r" style="left:32.5px;top:365.0px;width:867.5px;height:1.0px;background:#000;"></div><div class="r" style="left:32.5px;top:385.0px;width:867.5px;height:1.0px;background:#000;"></div><div class="r" style="left:32.5px;top:405.0px;width:867.5px;height:1.0px;background:#000;"></div><div class="r" style="left:32.5px;top:425.0px;width:867.5px;height:1.0px;background:#000;"></div><div class="r" style="left:32.5px;top:445.0px;width:867.5px;height:1.0px;background:#000;"></div><div class="r" style="left:32.5px;top:465.0px;width:867.5px;height:1.0px;background:#000;"></div><div class="r" style="left:32.5px;top:485.0px;width:867.5px;height:1.0px;background:#000;"></div><div class="r" style="left:32.5px;top:505.0px;width:867.5px;height:1.0px;background:#000;"></div><div class="r" style="left:32.5px;top:525.0px;width:867.5px;height:1.0px;background:#000;"></div><div class="r" style="left:32.5px;top:545.0px;width:867.5px;height:1.0px;background:#000;"></div><div class="r" style="left:32.5px;top:565.0px;width:867.5px;height:1.0px;background:#000;"></div><div class="r" style="left:32.5px;top:585.0px;width:867.5px;height:1.0px;background:#000;"></div><div class="r" style="left:32.5px;top:605.0px;width:867.5px;height:1.0px;background:#000;"></div><div class="r" style="left:32.5px;top:625.0px;width:867.5px;height:1.0px;background:#000;"></div><div class="r" style="left:32.5px;top:645.0px;width:867.5px;height:1.0px;background:#000;"></div><div class="r" style="left:32.5px;top:665.0px;width:867.5px;height:1.0px;background:#000;"></div><div class="r" style="left:32.5px;top:685.0px;width:867.5px;height:1.0px;background:#000;"></div><div class="r" style="left:178.1px;top:232.5px;width:1.0px;height:459.5px;background:#000;"></div><div class="r" style="left:289.1px;top:232.5px;width:1.0px;height:459.5px;background:#000;"></div><div class="r" style="left:392.9px;top:232.5px;width:1.0px;height:459.5px;background:#000;"></div><div class="r" style="left:497.1px;top:232.5px;width:1.0px;height:459.5px;background:#000;"></div><div class="r" style="left:636.2px;top:232.5px;width:1.0px;height:459.5px;background:#000;"></div><div class="r" style="left:7px;top:692px;width:1393px;height:28.200000000000045px;background:#ebebeb;"></div><div class="r" style="left:7px;top:692px;width:1393px;height:1px;background:#d4d4d4;"></div><svg class="s" style="left:31px;top:699px;" width="10" height="12" viewBox="0 0 10 12"><path d="M7 2 L2.5 6 L7 10 Z" fill="#c4c4c4"/></svg><svg class="s" style="left:60px;top:699px;" width="10" height="12" viewBox="0 0 10 12"><path d="M3 2 L7.5 6 L3 10 Z" fill="#1e5e3a"/></svg><div class="r" style="left:107px;top:697px;width:1px;height:19px;background:#c8c8c8;"></div><div class="r" style="left:247.3px;top:697px;width:1.0px;height:19px;background:#c8c8c8;"></div><div class="r" style="left:382px;top:697px;width:1px;height:19px;background:#c8c8c8;"></div><div class="r" style="left:681.2px;top:697px;width:1.0px;height:19px;background:#c8c8c8;"></div><div class="t" style="left:124.20px;top:700.03px;font-size:12.6px;line-height:12.6px;color:#444;transform:scaleX(0.9958);transform-origin:0 0;">Rincian Settlement</div><div class="t" style="left:261.20px;top:700.03px;font-size:12.6px;line-height:12.6px;color:#444;transform:scaleX(1.0337);transform-origin:0 0;">Pendapatan Kotor</div><div class="t" style="left:399.30px;top:700.03px;font-size:12.6px;line-height:12.6px;color:#444;transform:scaleX(1.0193);transform-origin:0 0;">Subtotal Sebelum Diskon</div><div class="r" style="left:562.5px;top:692px;width:116.70000000000005px;height:24px;background:#fff;box-shadow:1px 0 0 #d0d0d0,-1px 0 0 #d0d0d0;"></div><div class="r" style="left:562.5px;top:714.6px;width:116.70000000000005px;height:2.0px;background:#217346;"></div><div class="t" style="left:574.40px;top:699.20px;font-size:13px;line-height:13px;color:#217346;font-weight:bold;transform:scaleX(0.9894);transform-origin:0 0;">Diskon Penjual</div><div class="t" style="left:694.40px;top:700.03px;font-size:12.6px;line-height:12.6px;color:#444;transform:scaleX(0.9293);transform-origin:0 0;">Rincian Per Pesanan</div><div class="r" style="left:7px;top:720.2px;width:1393px;height:21.799999999999955px;background:#f3f2f1;border-radius:0 0 0 8px;"></div><div class="r" style="left:7px;top:720.2px;width:1393px;height:0.7999999999999545px;background:#dedede;"></div><div class="t" style="left:14.30px;top:726.18px;font-size:11.6px;line-height:11.6px;color:#3a3a3a;transform:scaleX(0.9037);transform-origin:0 0;">Ready</div><div class="r" style="left:6px;top:40px;width:1px;height:696px;background:#8f8f8f;"></div><div class="r" style="left:6px;top:10px;width:1px;height:30px;background:rgba(0,0,0,0.25);"></div></div><svg class="s" style="left:0;top:0" width="1315" height="823" viewBox="0 0 1315 823">
<defs><mask id="m" maskUnits="userSpaceOnUse" x="0" y="0" width="1315" height="823">
<g transform="translate(621.8,115) rotate(-20.5) scale(1.0,1) translate(1.50,0)"><text x="0" y="21.14" text-anchor="middle" font-family="Liberation Sans" font-weight="bold" font-size="58" letter-spacing="3" stroke-linejoin="round" fill="#fff" stroke="#fff" stroke-width="6.2">DUMMY</text><text x="0" y="21.14" text-anchor="middle" font-family="Liberation Sans" font-weight="bold" font-size="58" letter-spacing="3" stroke-linejoin="round" fill="#000" stroke="#000" stroke-width="1.2">DUMMY</text></g>
</mask></defs>
<rect x="0" y="0" width="1315" height="823" fill="#000" mask="url(#m)"/>
<g fill="#000"><path d="M479.4 99.4 C479.5 103.5 479.3 115.7 479.9 124.0 C480.5 132.3 481.2 141.0 482.8 149.5 C484.4 158.0 486.4 166.5 489.6 175.0 C492.9 183.5 497.1 192.7 502.3 200.5 C507.5 208.3 517.9 218.2 521.0 221.8 L530.4 220 C527.0 216.8 515.7 208.0 510.0 200.5 C504.3 193.0 499.8 183.5 496.4 175.0 C493.0 166.5 491.2 158.0 489.6 149.5 C488.0 141.0 487.4 132.6 487.0 124.0 C486.6 115.4 487.0 102.1 487.0 97.7 Z"/><path d="M717.8 11.9 C721.0 15.6 731.5 26.1 737.3 34.0 C743.1 42.0 748.6 51.1 752.7 59.6 C756.8 68.1 760.0 76.6 762.0 85.1 C764.0 93.6 764.3 102.5 764.6 110.6 C764.9 118.7 763.9 129.8 763.7 133.6 L771.4 131 C771.5 127.6 772.6 118.2 772.2 110.6 C771.8 102.9 770.8 93.6 768.8 85.1 C766.8 76.6 764.3 68.1 760.3 59.6 C756.3 51.1 750.8 42.4 745.0 34.0 C739.2 25.6 728.7 13.5 725.4 9.4 Z"/></g></svg>
</body></html>
